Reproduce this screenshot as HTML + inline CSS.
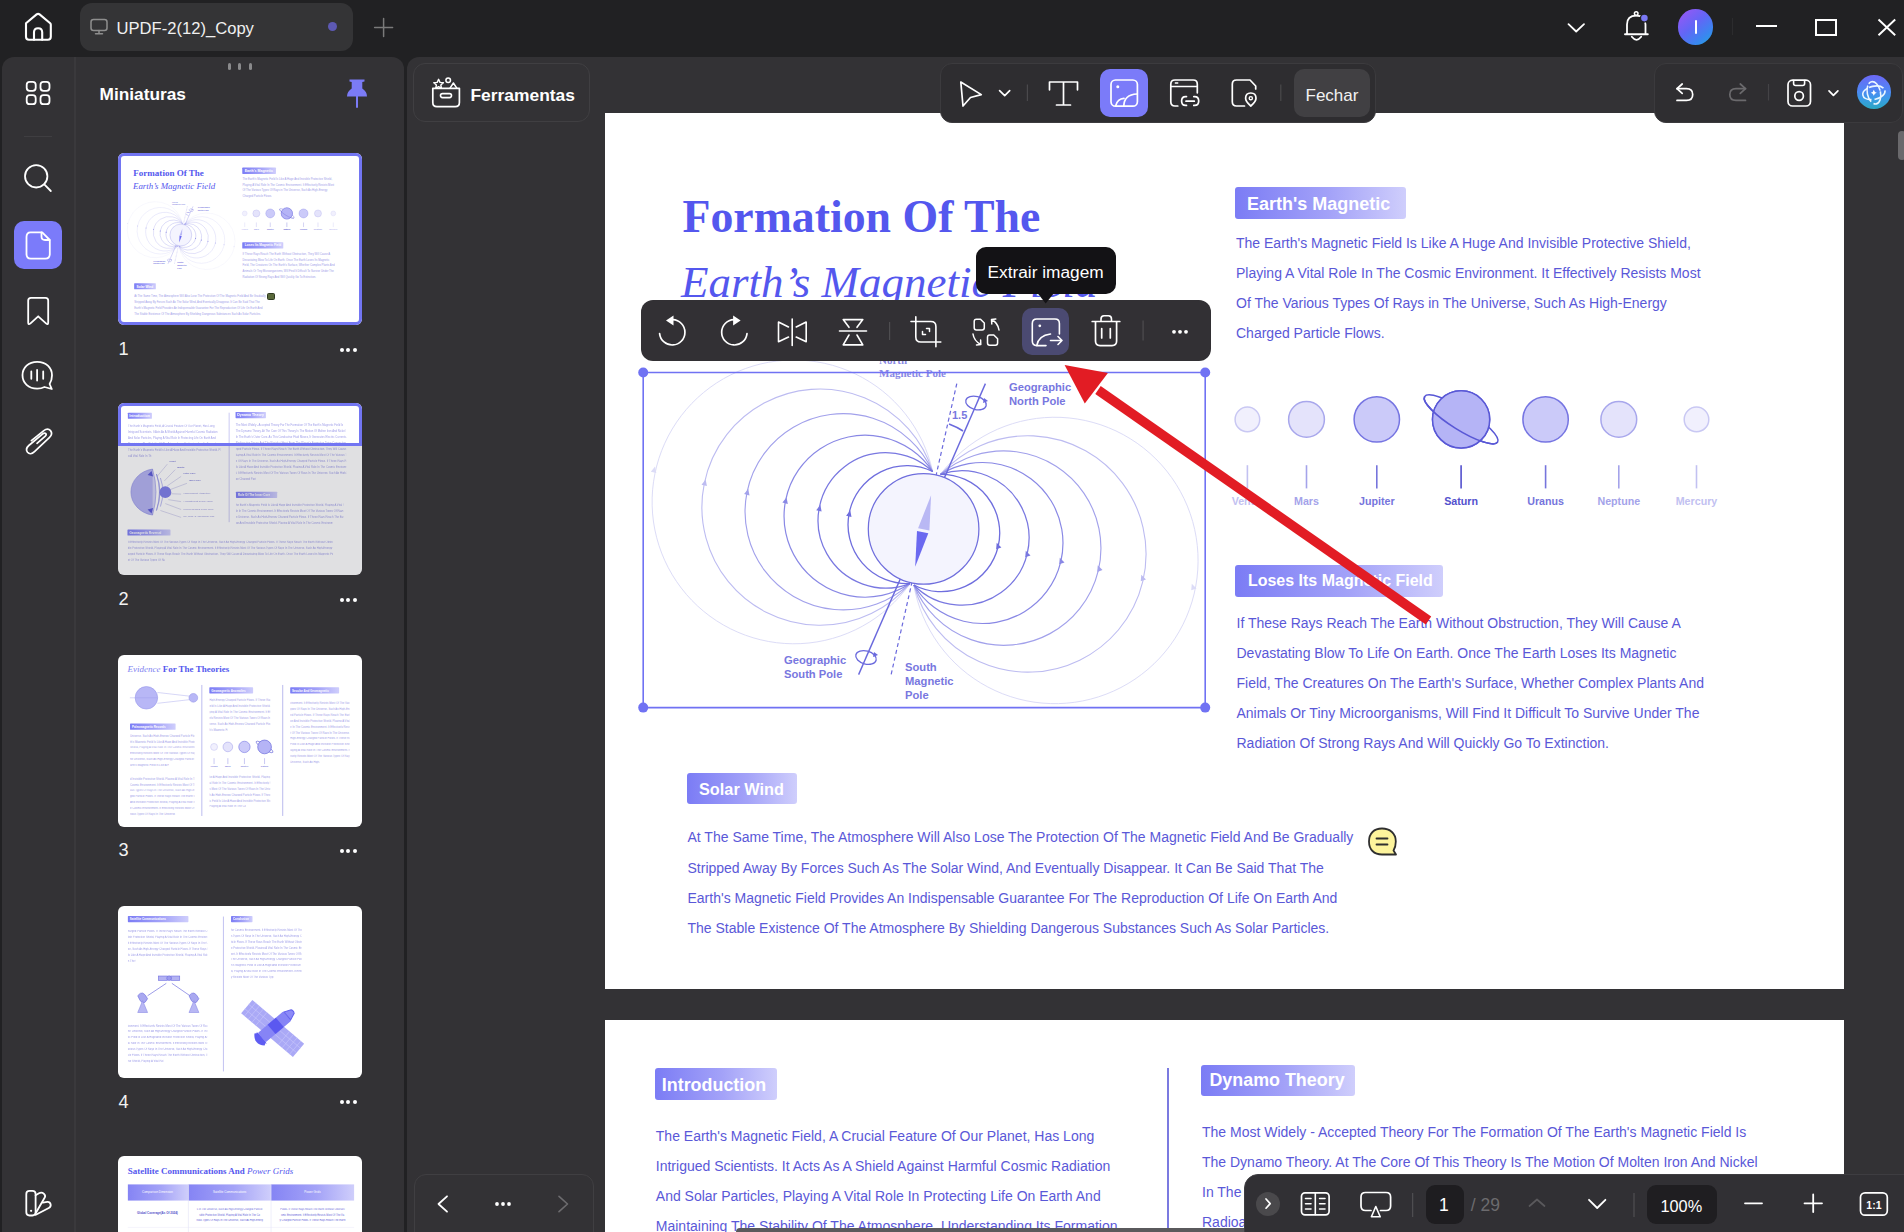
<!DOCTYPE html><html><head><meta charset="utf-8"><style>
*{margin:0;padding:0;box-sizing:border-box}
html,body{width:1904px;height:1232px;overflow:hidden;background:#212123;font-family:"Liberation Sans",sans-serif}
.a{position:absolute}
svg{position:absolute;overflow:visible;left:0;top:0}
.ic{fill:none;stroke:#fff;stroke-width:1.8;stroke-linecap:round;stroke-linejoin:round}
.t{position:absolute;white-space:nowrap;line-height:1}
.pt{position:absolute;white-space:nowrap;color:#5a58d8;font-size:14px;line-height:14px;font-family:"Liberation Sans",sans-serif}
.th div.t[style*="font-size:14px"]{opacity:.6}
.lbl{position:absolute;height:31.5px;border-radius:3px;background:linear-gradient(90deg,#7b7cf5 0%,#a3a2f8 55%,#cfcefc 100%);color:#fff;font-weight:bold;white-space:nowrap;line-height:1}
</style></head><body><div class="a" style="left:0;top:0;width:1904px;height:57px;background:#212123"></div>
<svg width="40" height="40" style="left:18px;top:8px" viewBox="18 8 40 40" ><path class="ic" style="stroke-width:2.1" d="M26 23.2 L36.6 14.4 Q38.1 13.2 39.6 14.4 L50.2 23.2 Q50.8 23.8 50.8 24.8 V36.8 Q50.8 39.8 47.8 39.8 H29 Q26 39.8 26 36.8 V24.8 Q26 23.8 26 23.2 Z"/><path class="ic" style="stroke-width:2.1" d="M34 39.8 V32.3 Q34 28.2 38.1 28.2 Q42.2 28.2 42.2 32.3 V39.8"/></svg>
<div class="a" style="left:80px;top:3px;width:273px;height:48px;background:#343436;border-radius:12px"></div>
<svg width="30" height="30" style="left:85px;top:12px" viewBox="85 12 30 30" ><rect x="91" y="19.5" width="16" height="11" rx="2.5" class="ic" style="stroke:#8e8e8e;stroke-width:1.5"/><path d="M99 30.5 V33.6 M95.5 33.8 H102.5" class="ic" style="stroke:#8e8e8e;stroke-width:1.5"/></svg>
<div class="t" style="left:116.5px;top:21.35px;font-size:16.6px;color:#f0f0f0;font-weight:normal;font-family:'Liberation Sans';font-style:normal;">UPDF-2(12)_Copy</div>
<div class="a" style="left:327.5px;top:22.3px;width:9px;height:9px;border-radius:50%;background:#5d59b3"></div>
<svg width="30" height="30" style="left:368px;top:12px" viewBox="368 12 30 30" ><path d="M383.6 18.5 V36.5 M374.6 27.5 H392.6" class="ic" style="stroke:#7a7a7a;stroke-width:1.5"/></svg>
<svg width="30" height="20" style="left:1560px;top:15px" viewBox="1560 15 30 20" ><path d="M1568.5 24.2 L1576.2 31.5 L1584 24.2" class="ic" style="stroke-width:1.8"/></svg>
<svg width="40" height="40" style="left:1615px;top:5px" viewBox="1615 5 40 40" ><path d="M1627 34 V24.5 Q1627 15.6 1636.2 15.6 Q1645.5 15.6 1645.5 24.5 V34" class="ic" style="stroke-width:1.8"/><path d="M1625 34.2 H1647.8" class="ic" style="stroke-width:1.9"/><path d="M1631.8 36.8 Q1636.5 42.8 1641.2 36.8" class="ic" style="stroke-width:1.8"/><circle cx="1636.2" cy="13.6" r="1.8" class="ic" style="stroke-width:1.5"/><circle cx="1644.4" cy="18.1" r="4.6" fill="#212123"/><circle cx="1644.4" cy="18.1" r="3.3" fill="#7a78f5"/></svg>
<div class="a" style="left:1677.6px;top:9px;width:35.6px;height:35.6px;border-radius:50%;background:linear-gradient(140deg,#a055f5 0%,#6266f6 45%,#3a86f0 75%,#20a8dc 100%)"></div>
<div class="a" style="left:1694.8px;top:20px;width:1.8px;height:14.4px;background:#fff;border-radius:1px"></div>
<div class="a" style="left:1732px;top:18px;width:1px;height:17px;background:#2c2c2e"></div>
<div class="a" style="left:1755.7px;top:25.2px;width:21px;height:2px;background:#fff"></div>
<div class="a" style="left:1815.3px;top:18.5px;width:21.4px;height:17.3px;border:2px solid #fff"></div>
<svg width="30" height="30" style="left:1870px;top:12px" viewBox="1870 12 30 30" ><path d="M1878.5 19.5 L1895.2 35.3 M1895.2 19.5 L1878.5 35.3" class="ic" style="stroke-width:1.9;stroke-linecap:butt"/></svg>
<div class="a" style="left:2px;top:57px;width:402px;height:1175px;background:#333235;border-radius:12px 12px 0 0"></div>
<div class="a" style="left:74px;top:57px;width:1.5px;height:1175px;background:#3a393c"></div>
<svg width="40" height="40" style="left:20px;top:75px" viewBox="20 75 40 40" ><rect x="26.7" y="81.8" width="9" height="9" rx="3" class="ic"/><rect x="40.5" y="81.8" width="9" height="9" rx="3" class="ic"/><rect x="26.7" y="95.2" width="9" height="9" rx="3" class="ic"/><rect x="40.5" y="95.2" width="9" height="9" rx="3" class="ic"/></svg>
<div class="a" style="left:24px;top:135.5px;width:28px;height:1.5px;background:#3f3e41"></div>
<svg width="40" height="40" style="left:18px;top:158px" viewBox="18 158 40 40" ><circle cx="36.2" cy="176.3" r="11.2" class="ic"/><path d="M44.3 184.4 L50.8 191" class="ic"/></svg>
<div class="a" style="left:14px;top:221px;width:48px;height:47.5px;border-radius:10px;background:#7b7bfa"></div>
<svg width="40" height="40" style="left:18px;top:225px" viewBox="18 225 40 40" ><path d="M30.5 232.3 H42.2 L49.8 240 V254 Q49.8 258.7 45.3 258.7 H30.8 Q26.5 258.7 26.5 254 V237 Q26.5 232.3 30.5 232.3 Z" class="ic"/><path d="M41.5 232.5 V236.5 Q41.5 240 45 240 H49.5" class="ic"/></svg>
<svg width="40" height="40" style="left:18px;top:290px" viewBox="18 290 40 40" ><path d="M31 297.8 H45.5 Q48.2 297.8 48.2 300.5 V322.5 Q48.2 325.3 46 323.3 L38.2 316.3 L30.5 323.3 Q28.2 325.3 28.2 322.5 V300.5 Q28.2 297.8 31 297.8 Z" class="ic"/></svg>
<svg width="40" height="40" style="left:18px;top:355px" viewBox="18 355 40 40" ><path d="M37.2 361.8 C28.5 361.8 22.5 367.5 22.5 375.3 C22.5 383 28.5 388.6 37.2 388.6 C40 388.6 42.5 388 44.5 387 L51.8 389 L49.6 384 C51.2 381.5 52 378.5 52 375.3 C52 367.5 46 361.8 37.2 361.8 Z" class="ic"/><path d="M31.3 371.5 V378.8 M37.1 370 V380.5 M43.2 371.5 V378.8" class="ic"/></svg>
<svg width="40" height="40" style="left:18px;top:422px" viewBox="18 422 40 40" ><path d="M31.4 440.7 L43.5 430.8 Q47.8 427.5 50.5 430.6 Q53.2 434 49.3 437.6 L34.5 451.6 Q30.2 455.5 27.5 452.3 Q25 449 28.8 445.5 L42.8 433.8 Q44.8 432.5 45.8 433.6 Q46.8 434.8 45 436.4 L37 443.3" class="ic" style="stroke-width:1.7"/></svg>
<svg width="40" height="40" style="left:18px;top:1183px" viewBox="18 1183 40 40" ><path d="M29.5 1190.8 H32.4 Q35.6 1190.8 35.6 1194 V1212.3 Q35.6 1215.5 32.4 1215.5 H29.5 Q26.3 1215.5 26.3 1212.3 V1194 Q26.3 1190.8 29.5 1190.8 Z" class="ic"/><path d="M35.6 1195.2 L39 1193.2 Q41.8 1191.8 44 1193.8 Q46 1195.8 44.6 1197.8 L35.8 1213" class="ic"/><path d="M42.8 1202.6 L47.3 1201.9 Q50 1201.7 50.6 1204.3 Q51.2 1206.9 48.8 1208 L35.8 1214.8" class="ic"/><circle cx="31.1" cy="1210.8" r="1.1" fill="#fff"/></svg>
<div class="a" style="left:227.5px;top:63px;width:3px;height:6.5px;border-radius:1.5px;background:#8a8a8c"></div>
<div class="a" style="left:238px;top:63px;width:3px;height:6.5px;border-radius:1.5px;background:#8a8a8c"></div>
<div class="a" style="left:248.7px;top:63px;width:3px;height:6.5px;border-radius:1.5px;background:#8a8a8c"></div>
<div class="t" style="left:99.5px;top:86.36px;font-size:17.3px;color:#fff;font-weight:bold;font-family:'Liberation Sans';font-style:normal;">Miniaturas</div>
<svg width="30" height="40" style="left:342px;top:75px" viewBox="342 75 30 40" ><path d="M349.5 79.5 H364.5 V81.5 L362.3 82 V88.5 Q367 91.5 367 96.5 H347 Q347 91.5 351.7 88.5 V82 L349.5 81.5 Z" fill="#7b7bf6"/><path d="M357 96 V107.8" stroke="#7b7bf6" stroke-width="2"/></svg>
<div class="t" style="left:118.5px;top:340.09px;font-size:18.2px;color:#f2f2f2;font-weight:normal;font-family:'Liberation Sans';font-style:normal;">1</div>
<div class="a" style="left:339.5px;top:347.5px;width:4px;height:4px;border-radius:50%;background:#fff"></div>
<div class="a" style="left:346.2px;top:347.5px;width:4px;height:4px;border-radius:50%;background:#fff"></div>
<div class="a" style="left:352.9px;top:347.5px;width:4px;height:4px;border-radius:50%;background:#fff"></div>
<div class="t" style="left:118.5px;top:590.39px;font-size:18.2px;color:#f2f2f2;font-weight:normal;font-family:'Liberation Sans';font-style:normal;">2</div>
<div class="a" style="left:339.5px;top:597.8px;width:4px;height:4px;border-radius:50%;background:#fff"></div>
<div class="a" style="left:346.2px;top:597.8px;width:4px;height:4px;border-radius:50%;background:#fff"></div>
<div class="a" style="left:352.9px;top:597.8px;width:4px;height:4px;border-radius:50%;background:#fff"></div>
<div class="t" style="left:118.5px;top:841.39px;font-size:18.2px;color:#f2f2f2;font-weight:normal;font-family:'Liberation Sans';font-style:normal;">3</div>
<div class="a" style="left:339.5px;top:848.8px;width:4px;height:4px;border-radius:50%;background:#fff"></div>
<div class="a" style="left:346.2px;top:848.8px;width:4px;height:4px;border-radius:50%;background:#fff"></div>
<div class="a" style="left:352.9px;top:848.8px;width:4px;height:4px;border-radius:50%;background:#fff"></div>
<div class="t" style="left:118.5px;top:1092.89px;font-size:18.2px;color:#f2f2f2;font-weight:normal;font-family:'Liberation Sans';font-style:normal;">4</div>
<div class="a" style="left:339.5px;top:1100.3px;width:4px;height:4px;border-radius:50%;background:#fff"></div>
<div class="a" style="left:346.2px;top:1100.3px;width:4px;height:4px;border-radius:50%;background:#fff"></div>
<div class="a" style="left:352.9px;top:1100.3px;width:4px;height:4px;border-radius:50%;background:#fff"></div>
<div class="a" style="left:407px;top:57px;width:1497px;height:1175px;background:#333235;border-radius:12px 0 0 0"></div>
<div class="a" style="left:605px;top:113px;width:1239px;height:875.5px;background:#fff"></div>
<div class="a" style="left:605px;top:1019.5px;width:1239px;height:213px;background:#fff"></div>
<div class="a" style="left:1897.5px;top:131px;width:8px;height:29px;border-radius:4px;background:#6a696c"></div>
<div class="a" style="left:117.7px;top:153.2px;width:244.4px;height:172.1px;border-radius:6px;overflow:hidden;background:#fff"><div class="a th" style="left:0;top:0;width:1239px;height:876px;transform:scale(0.19725);transform-origin:0 0"><div class="t" style="left:77.5px;top:80.94px;font-size:45.8px;color:#5457ee;font-weight:bold;font-family:'Liberation Serif';font-style:normal;">Formation Of The</div><div class="t" style="left:76px;top:147.11px;font-size:45px;color:#5457ee;font-weight:normal;font-family:'Liberation Serif';font-style:italic;">Earth’s Magnetic Field</div><div class="lbl" style="left:630.2px;top:74.1px;width:171.3px"></div><div class="t" style="left:642px;top:81.66px;font-size:18px;color:#fff;font-weight:bold;font-family:'Liberation Sans';font-style:normal;">Earth's Magnetic</div><div class="t" style="left:631px;top:122.55px;font-size:14px;color:#5a58d8;font-weight:normal;font-family:'Liberation Sans';font-style:normal;">The Earth's Magnetic Field Is Like A Huge And Invisible Protective Shield,</div><div class="t" style="left:631px;top:152.62px;font-size:14px;color:#5a58d8;font-weight:normal;font-family:'Liberation Sans';font-style:normal;">Playing A Vital Role In The Cosmic Environment. It Effectively Resists Most</div><div class="t" style="left:631px;top:182.69px;font-size:14px;color:#5a58d8;font-weight:normal;font-family:'Liberation Sans';font-style:normal;">Of The Various Types Of Rays in The Universe, Such As High-Energy</div><div class="t" style="left:631px;top:212.76px;font-size:14px;color:#5a58d8;font-weight:normal;font-family:'Liberation Sans';font-style:normal;">Charged Particle Flows.</div><svg width="1239" height="877" style="left:0;top:0" viewBox="0 0 1239 877"><path d="M327.6 358.5 A141.9 141.9 0 1 0 305.0 470.6" fill="none" stroke="#dcdcf7" stroke-width="1.0"/><path d="M335.5 361.3 A143.2 143.2 0 1 1 308.8 472.0" fill="none" stroke="#dcdcf7" stroke-width="1.0"/><path d="M327.6 358.5 A118.1 118.1 0 1 0 305.0 470.6" fill="none" stroke="#bdbcf1" stroke-width="1.1"/><path d="M335.5 361.3 A118.2 118.2 0 1 1 308.8 472.0" fill="none" stroke="#bdbcf1" stroke-width="1.1"/><path d="M327.6 358.5 A98.1 98.1 0 1 0 305.0 470.6" fill="none" stroke="#a2a1eb" stroke-width="1.15"/><path d="M335.5 361.3 A97.2 97.2 0 1 1 308.8 472.0" fill="none" stroke="#a2a1eb" stroke-width="1.15"/><path d="M327.6 358.5 A81.0 81.0 0 1 0 305.0 470.6" fill="none" stroke="#8988e5" stroke-width="1.2"/><path d="M335.5 361.3 A80.5 80.5 0 1 1 308.8 472.0" fill="none" stroke="#8988e5" stroke-width="1.2"/><path d="M327.6 358.5 A67.7 67.7 0 1 0 305.0 470.6" fill="none" stroke="#7978e1" stroke-width="1.25"/><path d="M335.5 361.3 A67.2 67.2 0 1 1 308.8 472.0" fill="none" stroke="#7978e1" stroke-width="1.25"/><path d="M327.6 358.5 A59.0 59.0 0 1 0 305.0 470.6" fill="none" stroke="#6f6ede" stroke-width="1.3"/><path d="M335.5 361.3 A58.7 58.7 0 1 1 308.8 472.0" fill="none" stroke="#6f6ede" stroke-width="1.3"/><path d="M49.2 353.5 L52.0 359.5 L46.4 359.5 Z" fill="#dcdcf7" transform="rotate(14 49.2 357.0)"/><path d="M588.0 470.5 L590.8 476.5 L585.2 476.5 Z" fill="#dcdcf7" transform="rotate(-20 588.0 474.0)"/><path d="M99.8 366.4 L102.6 372.4 L97.0 372.4 Z" fill="#bdbcf1" transform="rotate(14 99.8 369.9)"/><path d="M537.5 461.5 L540.3 467.5 L534.7 467.5 Z" fill="#bdbcf1" transform="rotate(-20 537.5 465.0)"/><path d="M142.4 375.8 L145.2 381.8 L139.6 381.8 Z" fill="#a2a1eb" transform="rotate(14 142.4 379.3)"/><path d="M494.0 452.1 L496.8 458.1 L491.2 458.1 Z" fill="#a2a1eb" transform="rotate(-20 494.0 455.6)"/><path d="M180.7 384.3 L183.5 390.3 L177.9 390.3 Z" fill="#8988e5" transform="rotate(14 180.7 387.8)"/><path d="M456.0 444.5 L458.8 450.5 L453.2 450.5 Z" fill="#8988e5" transform="rotate(-20 456.0 448.0)"/><path d="M214.5 392.0 L217.3 398.0 L211.7 398.0 Z" fill="#7978e1" transform="rotate(14 214.5 395.5)"/><path d="M422.0 437.5 L424.8 443.5 L419.2 443.5 Z" fill="#7978e1" transform="rotate(-20 422.0 441.0)"/><path d="M244.4 397.5 L247.2 403.5 L241.6 403.5 Z" fill="#6f6ede" transform="rotate(14 244.4 401.0)"/><path d="M392.9 429.5 L395.7 435.5 L390.1 435.5 Z" fill="#6f6ede" transform="rotate(-20 392.9 433.0)"/><path d="M380.4 270.6 L253.60000000000002 561.6" stroke="#6a69dd" stroke-width="1.4"/><path d="M351.79999999999995 270.6 L285.70000000000005 563.4" stroke="#6a69dd" stroke-width="1.2" stroke-dasharray="4 3"/><circle cx="318.6" cy="415.9" r="55.3" fill="#f4f4fe" stroke="#6f6edd" stroke-width="1.25"/><path d="M326.1 382.2 L324.4 417.5 L313.1 415.20000000000005 Z" fill="#b9b8f4"/><path d="M312 418 L323.29999999999995 420.29999999999995 L310.20000000000005 453.79999999999995 Z" fill="#6b69f0"/><path d="M344 311 Q352 314 358 318" fill="none" stroke="#6a69dd" stroke-width="1.6"/><ellipse cx="371" cy="290" rx="10.5" ry="6.5" transform="rotate(15 371 290)" fill="none" stroke="#6a69dd" stroke-width="1.3"/><path d="M379 285 l4 3 l-5 2 z" fill="#6a69dd"/><ellipse cx="261" cy="544.5" rx="10.5" ry="6.5" transform="rotate(15 261 544.5)" fill="none" stroke="#6a69dd" stroke-width="1.3"/><path d="M269 539 l4 3 l-5 2 z" fill="#6a69dd"/></svg><svg width="1239" height="877" style="left:0;top:0" viewBox="0 0 1239 877"><circle cx="642.4" cy="306.4" r="12.3" fill="#f1f0fd" stroke="#c9c8f3" stroke-width="1.5"/><path d="M642.4 352.2 V375.4" stroke="#c2c1f1" stroke-width="1.6"/><circle cx="701.5" cy="306.4" r="17.9" fill="#e4e3fb" stroke="#a8a7ec" stroke-width="1.5"/><path d="M701.5 352.2 V375.4" stroke="#a4a3ea" stroke-width="1.6"/><circle cx="771.8" cy="306.4" r="22.7" fill="#cbcaf9" stroke="#7675e2" stroke-width="1.5"/><path d="M771.8 352.2 V375.4" stroke="#7675dc" stroke-width="1.6"/><circle cx="856.1" cy="306.4" r="28.6" fill="#b5b4f6" stroke="#5958d6" stroke-width="1.5"/><path d="M856.1 352.2 V375.4" stroke="#5351cd" stroke-width="1.6"/><circle cx="940.6" cy="306.4" r="22.7" fill="#cbcaf9" stroke="#7675e2" stroke-width="1.5"/><path d="M940.6 352.2 V375.4" stroke="#7675dc" stroke-width="1.6"/><circle cx="1013.8" cy="306.4" r="17.9" fill="#e4e3fb" stroke="#a8a7ec" stroke-width="1.5"/><path d="M1013.8 352.2 V375.4" stroke="#a4a3ea" stroke-width="1.6"/><circle cx="1091.5" cy="306.4" r="12.3" fill="#f1f0fd" stroke="#c9c8f3" stroke-width="1.5"/><path d="M1091.5 352.2 V375.4" stroke="#c2c1f1" stroke-width="1.6"/><ellipse cx="856.1" cy="306.4" rx="43" ry="10.5" transform="rotate(32 856.1 306.4)" fill="none" stroke="#5958d6" stroke-width="1.6"/><circle cx="856.1" cy="306.4" r="28.6" fill="#b5b4f6" stroke="#5958d6" stroke-width="1.5"/><path d="M819.6 283.6 A43 10.5 32 0 0 892.6 329.2" fill="none" stroke="#5958d6" stroke-width="1.6"/></svg><div class="t" style="left:602.4px;width:80px;text-align:center;top:383.3px;font-size:10.7px;font-weight:bold;color:#c2c1f1">Venus</div><div class="t" style="left:661.5px;width:80px;text-align:center;top:383.3px;font-size:10.7px;font-weight:bold;color:#a4a3ea">Mars</div><div class="t" style="left:731.8px;width:80px;text-align:center;top:383.3px;font-size:10.7px;font-weight:bold;color:#7675dc">Jupiter</div><div class="t" style="left:816.1px;width:80px;text-align:center;top:383.3px;font-size:10.7px;font-weight:bold;color:#5351cd">Saturn</div><div class="t" style="left:900.6px;width:80px;text-align:center;top:383.3px;font-size:10.7px;font-weight:bold;color:#7675dc">Uranus</div><div class="t" style="left:973.8px;width:80px;text-align:center;top:383.3px;font-size:10.7px;font-weight:bold;color:#a4a3ea">Neptune</div><div class="t" style="left:1051.5px;width:80px;text-align:center;top:383.3px;font-size:10.7px;font-weight:bold;color:#c2c1f1">Mercury</div><div class="lbl" style="left:630.2px;top:452.2px;width:207.7px"></div><div class="t" style="left:642.9px;top:460.26px;font-size:16px;color:#fff;font-weight:bold;font-family:'Liberation Sans';font-style:normal;">Loses Its Magnetic Field</div><div class="t" style="left:631.5px;top:502.75px;font-size:14px;color:#5a58d8;font-weight:normal;font-family:'Liberation Sans';font-style:normal;">If These Rays Reach The Earth Without Obstruction, They Will Cause A</div><div class="t" style="left:631.5px;top:532.85px;font-size:14px;color:#5a58d8;font-weight:normal;font-family:'Liberation Sans';font-style:normal;">Devastating Blow To Life On Earth. Once The Earth Loses Its Magnetic</div><div class="t" style="left:631.5px;top:562.95px;font-size:14px;color:#5a58d8;font-weight:normal;font-family:'Liberation Sans';font-style:normal;">Field, The Creatures On The Earth's Surface, Whether Complex Plants And</div><div class="t" style="left:631.5px;top:593.05px;font-size:14px;color:#5a58d8;font-weight:normal;font-family:'Liberation Sans';font-style:normal;">Animals Or Tiny Microorganisms, Will Find It Difficult To Survive Under The</div><div class="t" style="left:631.5px;top:623.15px;font-size:14px;color:#5a58d8;font-weight:normal;font-family:'Liberation Sans';font-style:normal;">Radiation Of Strong Rays And Will Quickly Go To Extinction.</div><div class="lbl" style="left:82.0px;top:659.8px;width:110.2px"></div><div class="t" style="left:94px;top:667.70px;font-size:16.3px;color:#fff;font-weight:bold;font-family:'Liberation Sans';font-style:normal;">Solar Wind</div><div class="t" style="left:82.5px;top:717.45px;font-size:14px;color:#5a58d8;font-weight:normal;font-family:'Liberation Sans';font-style:normal;">At The Same Time, The Atmosphere Will Also Lose The Protection Of The Magnetic Field And Be Gradually</div><div class="t" style="left:82.5px;top:747.50px;font-size:14px;color:#5a58d8;font-weight:normal;font-family:'Liberation Sans';font-style:normal;">Stripped Away By Forces Such As The Solar Wind, And Eventually Disappear. It Can Be Said That The</div><div class="t" style="left:82.5px;top:777.55px;font-size:14px;color:#5a58d8;font-weight:normal;font-family:'Liberation Sans';font-style:normal;">Earth's Magnetic Field Provides An Indispensable Guarantee For The Reproduction Of Life On Earth And</div><div class="t" style="left:82.5px;top:807.60px;font-size:14px;color:#5a58d8;font-weight:normal;font-family:'Liberation Sans';font-style:normal;">The Stable Existence Of The Atmosphere By Shielding Dangerous Substances Such As Solar Particles.</div><div class="t" style="left:404px;top:268.92px;font-size:11.2px;color:#7877e0;font-weight:bold;font-family:'Liberation Sans';font-style:normal;">Geographic</div><div class="t" style="left:404px;top:282.82px;font-size:11.2px;color:#7877e0;font-weight:bold;font-family:'Liberation Sans';font-style:normal;">North Pole</div><div class="t" style="left:179px;top:541.52px;font-size:11.2px;color:#7877e0;font-weight:bold;font-family:'Liberation Sans';font-style:normal;">Geographic</div><div class="t" style="left:179px;top:555.52px;font-size:11.2px;color:#7877e0;font-weight:bold;font-family:'Liberation Sans';font-style:normal;">South Pole</div><div class="t" style="left:300px;top:549.32px;font-size:11.2px;color:#7877e0;font-weight:bold;font-family:'Liberation Sans';font-style:normal;">South</div><div class="t" style="left:300px;top:563.32px;font-size:11.2px;color:#7877e0;font-weight:bold;font-family:'Liberation Sans';font-style:normal;">Magnetic</div><div class="t" style="left:300px;top:577.32px;font-size:11.2px;color:#7877e0;font-weight:bold;font-family:'Liberation Sans';font-style:normal;">Pole</div><div class="t" style="left:347px;top:296.69px;font-size:11px;color:#7877e0;font-weight:bold;font-family:'Liberation Sans';font-style:normal;">1.5</div><div class="t" style="left:274px;top:255.29px;font-size:11px;color:#8a89e4;font-weight:bold;font-family:'Liberation Serif';font-style:normal;">Magnetic Pole</div><div class="t" style="left:274px;top:241.79px;font-size:11px;color:#8a89e4;font-weight:bold;font-family:'Liberation Serif';font-style:normal;">North</div></div></div>
<div class="a" style="left:117.7px;top:403.2px;width:244.4px;height:172.1px;border-radius:6px;overflow:hidden;background:#fff"><div class="a th" style="left:0;top:0;width:1239px;height:876px;transform:scale(0.19725);transform-origin:0 0"><div class="lbl" style="left:50px;top:48.7px;width:121.9px"></div><div class="t" style="left:56.8px;top:57.4px;font-size:17.9px;color:#fff;font-weight:bold;font-family:'Liberation Sans';font-style:normal">Introduction</div><div class="t" style="left:50.8px;top:109.9px;font-size:14px;color:#5a58d8;font-weight:normal;font-family:'Liberation Sans';font-style:normal">The Earth's Magnetic Field, A Crucial Feature Of Our Planet, Has Long</div><div class="t" style="left:50.8px;top:139.9px;font-size:14px;color:#5a58d8;font-weight:normal;font-family:'Liberation Sans';font-style:normal">Intrigued Scientists. It Acts As A Shield Against Harmful Cosmic Radiation</div><div class="t" style="left:50.8px;top:169.9px;font-size:14px;color:#5a58d8;font-weight:normal;font-family:'Liberation Sans';font-style:normal">And Solar Particles, Playing A Vital Role In Protecting Life On Earth And</div><div class="t" style="left:50.8px;top:199.9px;font-size:14px;color:#5a58d8;font-weight:normal;font-family:'Liberation Sans';font-style:normal">Maintaining The Stability Of The Atmosphere. Understanding Its Formation</div><div class="t" style="left:50.8px;top:230.0px;font-size:14px;color:#5a58d8;width:470px;overflow:hidden">The Earth's Magnetic Field Is Like A Huge And Invisible Protective Shield, Playin</div><div class="t" style="left:50.8px;top:259.9px;font-size:14px;color:#5a58d8;width:118px;overflow:hidden">g A Vital Role In The Cosmi</div><svg width="1239" height="876" viewBox="0 0 1239 876" style="left:0;top:0"><path d="M175 335 A 130 118 0 0 0 175 568 Z" fill="#b3b2f2" stroke="#8a89e6" stroke-width="3"/><path d="M175 335 Q 210 450 175 568" fill="#d5d4f8" stroke="#8a89e6" stroke-width="3"/><path d="M195 360 Q 225 450 195 545 Q 230 450 195 360" fill="#c4c3f5" stroke="#8a89e6" stroke-width="3"/><path d="M215 380 Q 240 450 215 525" fill="none" stroke="#8a89e6" stroke-width="3"/><circle cx="240" cy="452" r="30" fill="#7d7cea"/><path d="M150 365 l20 -20 l8 28 z M150 540 l20 20 l8 -28 z" fill="#5a58d8"/><path d="M200 370 L250 310 M235 395 L290 338 M250 420 L320 372 M262 440 L350 407 M270 460 L320 462 M255 490 L320 500 M240 510 L320 540 M215 545 L320 580" stroke="#9c9bd8" stroke-width="2" fill="none"/></svg><div class="t" style="left:260px;top:289.8px;font-size:12px;color:#7776d6;font-weight:bold;font-family:'Liberation Sans';font-style:normal">Crust</div><div class="t" style="left:300px;top:317.8px;font-size:12px;color:#7776d6;font-weight:bold;font-family:'Liberation Sans';font-style:normal">Mantle</div><div class="t" style="left:330px;top:351.8px;font-size:12px;color:#7776d6;font-weight:bold;font-family:'Liberation Sans';font-style:normal">Outer Core</div><div class="t" style="left:360px;top:386.8px;font-size:12px;color:#7776d6;font-weight:bold;font-family:'Liberation Sans';font-style:normal">Inner Core</div><div class="t" style="left:332px;top:452.3px;font-size:11.5px;color:#8a89d8;font-weight:normal;font-family:'Liberation Sans';font-style:normal">c Environment. It Effectivel</div><div class="t" style="left:332px;top:491.3px;font-size:11.5px;color:#8a89d8;font-weight:normal;font-family:'Liberation Sans';font-style:normal">y Resists Most Of The Variou</div><div class="t" style="left:332px;top:531.3px;font-size:11.5px;color:#8a89d8;font-weight:normal;font-family:'Liberation Sans';font-style:normal">s Types Of Rays In The Unive</div><div class="t" style="left:332px;top:570.3px;font-size:11.5px;color:#8a89d8;font-weight:normal;font-family:'Liberation Sans';font-style:normal">rse, Such As High-Energy Cha</div><div class="a" style="left:562.2px;top:48.5px;width:1.6px;height:555px;background:#7b7ae0"></div><div class="lbl" style="left:596px;top:45.1px;width:153.8px"></div><div class="t" style="left:604.4px;top:52.8px;font-size:17.9px;color:#fff;font-weight:bold;font-family:'Liberation Sans';font-style:normal">Dynamo Theory</div><div class="t" style="left:597px;top:105.6px;font-size:14px;color:#5a58d8;font-weight:normal;font-family:'Liberation Sans';font-style:normal">The Most Widely - Accepted Theory For The Formation Of The Earth's Magnetic Field Is</div><div class="t" style="left:597px;top:135.6px;font-size:14px;color:#5a58d8;font-weight:normal;font-family:'Liberation Sans';font-style:normal">The Dynamo Theory. At The Core Of This Theory Is The Motion Of Molten Iron And Nickel</div><div class="t" style="left:597px;top:165.6px;font-size:14px;color:#5a58d8;font-weight:normal;font-family:'Liberation Sans';font-style:normal">In The Earth's Outer Core. As This Conductive Fluid Moves, It Generates Electric Currents.</div><div class="t" style="left:597px;top:195.6px;font-size:14px;color:#5a58d8;font-weight:normal;font-family:'Liberation Sans';font-style:normal">Radioactive Decay And The Residual Heat From The Planet's Formation Drive Convection</div><div class="t" style="left:597px;top:225.7px;font-size:14px;color:#5a58d8;width:560px;overflow:hidden">rged Particle Flows. If These Rays Reach The Earth Without Obstruction, They Will Cause A Deva</div><div class="t" style="left:597px;top:255.7px;font-size:14px;color:#5a58d8;width:560px;overflow:hidden">laying A Vital Role In The Cosmic Environment. It Effectively Resists Most Of The Various Type</div><div class="t" style="left:597px;top:285.6px;font-size:14px;color:#5a58d8;width:560px;overflow:hidden">s Of Rays In The Universe, Such As High-Energy Charged Particle Flows. If These Rays Reach The</div><div class="t" style="left:597px;top:315.6px;font-size:14px;color:#5a58d8;width:560px;overflow:hidden"> Is Like A Huge And Invisible Protective Shield, Playing A Vital Role In The Cosmic Environmen</div><div class="t" style="left:597px;top:345.6px;font-size:14px;color:#5a58d8;width:560px;overflow:hidden">t. It Effectively Resists Most Of The Various Types Of Rays In The Universe, Such As High-Ener</div><div class="t" style="left:597px;top:375.6px;font-size:14px;color:#5a58d8;width:101px;overflow:hidden">gy Charged Particle Flows</div><div class="lbl" style="left:597.8px;top:449.5px;width:209px"></div><div class="t" style="left:607.8px;top:458.8px;font-size:15px;color:#fff;font-weight:bold;font-family:'Liberation Sans';font-style:normal">Role Of The Inner Core</div><div class="t" style="left:597.8px;top:509.1px;font-size:14px;color:#5a58d8;width:545px;overflow:hidden">he Earth's Magnetic Field Is Like A Huge And Invisible Protective Shield, Playing A Vital Ro</div><div class="t" style="left:597.8px;top:539.1px;font-size:14px;color:#5a58d8;width:545px;overflow:hidden">le In The Cosmic Environment. It Effectively Resists Most Of The Various Types Of Rays In Th</div><div class="t" style="left:597.8px;top:569.1px;font-size:14px;color:#5a58d8;width:545px;overflow:hidden">e Universe, Such As High-Energy Charged Particle Flows. If These Rays Reach The Earth Withou</div><div class="t" style="left:597.8px;top:599.1px;font-size:14px;color:#5a58d8;width:490px;overflow:hidden">ge And Invisible Protective Shield, Playing A Vital Role In The Cosmic Environment. </div><div class="lbl" style="left:48.2px;top:640.9px;width:218px"></div><div class="t" style="left:58.2px;top:650.2px;font-size:15px;color:#fff;font-weight:bold;font-family:'Liberation Sans';font-style:normal">Geomagnetic Reversal</div><div class="t" style="left:50px;top:698.1px;font-size:14px;color:#5a58d8;width:1040px;overflow:hidden">It Effectively Resists Most Of The Various Types Of Rays In The Universe, Such As High-Energy Charged Particle Flows. If These Rays Reach The Earth Without Obstruction</div><div class="t" style="left:50px;top:728.1px;font-size:14px;color:#5a58d8;width:1040px;overflow:hidden">ble Protective Shield, Playing A Vital Role In The Cosmic Environment. It Effectively Resists Most Of The Various Types Of Rays In The Universe, Such As High-Energy Ch</div><div class="t" style="left:50px;top:758.1px;font-size:14px;color:#5a58d8;width:1040px;overflow:hidden">arged Particle Flows. If These Rays Reach The Earth Without Obstruction, They Will Cause A Devastating Blow To Life On Earth. Once The Earth Loses Its Magnetic Field, </div><div class="t" style="left:50px;top:788.1px;font-size:14px;color:#5a58d8;width:187px;overflow:hidden">st Of The Various Types Of Rays In The</div></div><div class="a" style="left:0;top:43px;width:244.4px;height:130px;background:rgba(60,60,75,.16)"></div></div>
<div class="a" style="left:117.7px;top:655.2px;width:244.4px;height:172.1px;border-radius:6px;overflow:hidden;background:#fff"><div class="a th" style="left:0;top:0;width:1239px;height:876px;transform:scale(0.19725);transform-origin:0 0"><div class="t" style="left:48.2px;top:48.8px;font-size:45.6px;color:#5457ee;font-weight:bold;font-family:'Liberation Serif';font-style:normal"><i style="font-weight:normal;opacity:.75">Evidence </i>For The Theories</div><svg width="1239" height="876" viewBox="0 0 1239 876" style="left:0;top:0"><circle cx="144" cy="217" r="57" fill="#b8b7f6" stroke="#9897ea" stroke-width="3"/><path d="M200 190 L375 210 M200 245 L375 225 M60 217 L200 217" stroke="#9897ea" stroke-width="2"/><circle cx="382" cy="217" r="22" fill="#b8b7f6" stroke="#9897ea" stroke-width="3"/><path d="M425 152 V816 M835 152 V816" stroke="#8c8be2" stroke-width="3"/><circle cx="487" cy="466" r="17.5" fill="#f1f0fd" stroke="#c9c8f3" stroke-width="3"/><circle cx="557" cy="466" r="24.4" fill="#e4e3fb" stroke="#a8a7ec" stroke-width="3"/><circle cx="641" cy="466" r="28.8" fill="#cbcaf9" stroke="#7675e2" stroke-width="3"/><ellipse cx="743" cy="466" rx="50" ry="12" transform="rotate(33 743 466)" fill="none" stroke="#5958d6" stroke-width="3"/><circle cx="743" cy="466" r="34.9" fill="#b5b4f6" stroke="#5958d6" stroke-width="3"/><path d="M487 523 V553 M557 523 V553 M641 523 V553 M743 523 V553" stroke="#a3a2ea" stroke-width="3"/></svg><div class="lbl" style="left:61px;top:347px;width:231px"></div><div class="t" style="left:71px;top:356.3px;font-size:15px;color:#fff;font-weight:bold;font-family:'Liberation Sans';font-style:normal">Paleomagnetic Records</div><div class="t" style="left:61px;top:402.1px;font-size:14px;color:#5a58d8;width:327px;overflow:hidden"> Universe, Such As High-Energy Charged Particle Flows. If T</div><div class="t" style="left:61px;top:432.1px;font-size:14px;color:#5a58d8;width:327px;overflow:hidden">th's Magnetic Field Is Like A Huge And Invisible Protective</div><div class="t" style="left:61px;top:462.1px;font-size:14px;color:#5a58d8;width:327px;overflow:hidden"> Shield, Playing A Vital Role In The Cosmic Environment. It</div><div class="t" style="left:61px;top:492.1px;font-size:14px;color:#5a58d8;width:327px;overflow:hidden"> Effectively Resists Most Of The Various Types Of Rays In T</div><div class="t" style="left:61px;top:522.1px;font-size:14px;color:#5a58d8;width:327px;overflow:hidden">he Universe, Such As High-Energy Charged Particle Flows. If</div><div class="t" style="left:61px;top:552.1px;font-size:14px;color:#5a58d8;width:196px;overflow:hidden">arth's Magnetic Field Is Like A Huge An</div><div class="t" style="left:61px;top:620.1px;font-size:14px;color:#5a58d8;width:327px;overflow:hidden">d Invisible Protective Shield, Playing A Vital Role In The </div><div class="t" style="left:61px;top:650.1px;font-size:14px;color:#5a58d8;width:327px;overflow:hidden">Cosmic Environment. It Effectively Resists Most Of The Vari</div><div class="t" style="left:61px;top:680.1px;font-size:14px;color:#5a58d8;width:327px;overflow:hidden">ous Types Of Rays In The Universe, Such As High-Energy Char</div><div class="t" style="left:61px;top:710.1px;font-size:14px;color:#5a58d8;width:327px;overflow:hidden">ged Particle Flows. If These Rays Reach The Earth Without O</div><div class="t" style="left:61px;top:740.1px;font-size:14px;color:#5a58d8;width:327px;overflow:hidden">And Invisible Protective Shield, Playing A Vital Role In Th</div><div class="t" style="left:61px;top:770.1px;font-size:14px;color:#5a58d8;width:327px;overflow:hidden">e Cosmic Environment. It Effectively Resists Most Of The Va</div><div class="t" style="left:61px;top:800.1px;font-size:14px;color:#5a58d8;width:229px;overflow:hidden">rious Types Of Rays In The Universe, Such As</div><div class="lbl" style="left:462.6px;top:163.8px;width:222px"></div><div class="t" style="left:472.6px;top:173.1px;font-size:15px;color:#fff;font-weight:bold;font-family:'Liberation Sans';font-style:normal">Geomagnetic Anomalies</div><div class="t" style="left:462.6px;top:221.2px;font-size:14px;color:#5a58d8;width:309px;overflow:hidden"> High-Energy Charged Particle Flows. If These Rays Reach</div><div class="t" style="left:462.6px;top:251.2px;font-size:14px;color:#5a58d8;width:309px;overflow:hidden">ield Is Like A Huge And Invisible Protective Shield, Pla</div><div class="t" style="left:462.6px;top:281.1px;font-size:14px;color:#5a58d8;width:309px;overflow:hidden">ying A Vital Role In The Cosmic Environment. It Effectiv</div><div class="t" style="left:462.6px;top:311.1px;font-size:14px;color:#5a58d8;width:309px;overflow:hidden">ely Resists Most Of The Various Types Of Rays In The Uni</div><div class="t" style="left:462.6px;top:341.1px;font-size:14px;color:#5a58d8;width:309px;overflow:hidden">verse, Such As High-Energy Charged Particle Flows. If Th</div><div class="t" style="left:462.6px;top:371.1px;font-size:14px;color:#5a58d8;width:93px;overflow:hidden">h's Magnetic Field Is Li</div><div class="t" style="left:437px;width:100px;text-align:center;top:560px;font-size:12px;font-weight:bold;color:#8382de">Venus</div><div class="t" style="left:507px;width:100px;text-align:center;top:560px;font-size:12px;font-weight:bold;color:#8382de">Mars</div><div class="t" style="left:591px;width:100px;text-align:center;top:560px;font-size:12px;font-weight:bold;color:#8382de">Jupiter</div><div class="t" style="left:693px;width:100px;text-align:center;top:560px;font-size:12px;font-weight:bold;color:#8382de">Saturn</div><div class="t" style="left:462.6px;top:611.1px;font-size:14px;color:#5a58d8;width:309px;overflow:hidden">ke A Huge And Invisible Protective Shield, Playing A Vit</div><div class="t" style="left:462.6px;top:641.1px;font-size:14px;color:#5a58d8;width:309px;overflow:hidden">al Role In The Cosmic Environment. It Effectively Resist</div><div class="t" style="left:462.6px;top:671.1px;font-size:14px;color:#5a58d8;width:309px;overflow:hidden">s Most Of The Various Types Of Rays In The Universe, Suc</div><div class="t" style="left:462.6px;top:701.1px;font-size:14px;color:#5a58d8;width:309px;overflow:hidden">h As High-Energy Charged Particle Flows. If These Rays R</div><div class="t" style="left:462.6px;top:731.1px;font-size:14px;color:#5a58d8;width:309px;overflow:hidden">ic Field Is Like A Huge And Invisible Protective Shield,</div><div class="t" style="left:462.6px;top:761.1px;font-size:14px;color:#5a58d8;width:185px;overflow:hidden"> Playing A Vital Role In The Cosmic En</div><div class="lbl" style="left:872.6px;top:163.8px;width:248px"></div><div class="t" style="left:882.6px;top:173.1px;font-size:15px;color:#fff;font-weight:bold;font-family:'Liberation Sans';font-style:normal">Secular And Geomagnetic</div><div class="t" style="left:872.6px;top:236.2px;font-size:14px;color:#5a58d8;width:301px;overflow:hidden">vironment. It Effectively Resists Most Of The Various T</div><div class="t" style="left:872.6px;top:266.1px;font-size:14px;color:#5a58d8;width:301px;overflow:hidden">ypes Of Rays In The Universe, Such As High-Energy Charg</div><div class="t" style="left:872.6px;top:296.1px;font-size:14px;color:#5a58d8;width:301px;overflow:hidden">ed Particle Flows. If These Rays Reach The Earth Withou</div><div class="t" style="left:872.6px;top:326.1px;font-size:14px;color:#5a58d8;width:301px;overflow:hidden">ge And Invisible Protective Shield, Playing A Vital Rol</div><div class="t" style="left:872.6px;top:356.1px;font-size:14px;color:#5a58d8;width:301px;overflow:hidden">e In The Cosmic Environment. It Effectively Resists Mos</div><div class="t" style="left:872.6px;top:386.1px;font-size:14px;color:#5a58d8;width:301px;overflow:hidden">t Of The Various Types Of Rays In The Universe, Such As</div><div class="t" style="left:872.6px;top:416.1px;font-size:14px;color:#5a58d8;width:301px;overflow:hidden"> High-Energy Charged Particle Flows. If These Rays Reac</div><div class="t" style="left:872.6px;top:446.1px;font-size:14px;color:#5a58d8;width:301px;overflow:hidden">Field Is Like A Huge And Invisible Protective Shield, P</div><div class="t" style="left:872.6px;top:476.1px;font-size:14px;color:#5a58d8;width:301px;overflow:hidden">laying A Vital Role In The Cosmic Environment. It Effec</div><div class="t" style="left:872.6px;top:506.1px;font-size:14px;color:#5a58d8;width:301px;overflow:hidden">tively Resists Most Of The Various Types Of Rays In The</div><div class="t" style="left:872.6px;top:536.1px;font-size:14px;color:#5a58d8;width:150px;overflow:hidden"> Universe, Such As High-Energy C</div></div></div>
<div class="a" style="left:117.7px;top:905.6px;width:244.4px;height:172.1px;border-radius:6px;overflow:hidden;background:#fff"><div class="a th" style="left:0;top:0;width:1239px;height:876px;transform:scale(0.19725);transform-origin:0 0"><div class="lbl" style="left:49.7px;top:50.8px;width:307px"></div><div class="t" style="left:59.7px;top:60.1px;font-size:15px;color:#fff;font-weight:bold;font-family:'Liberation Sans';font-style:normal">Satellite Communications</div><div class="t" style="left:49.7px;top:121.2px;font-size:14px;color:#5a58d8;width:403px;overflow:hidden">harged Particle Flows. If These Rays Reach The Earth Without Obstructio</div><div class="t" style="left:49.7px;top:151.2px;font-size:14px;color:#5a58d8;width:403px;overflow:hidden">ible Protective Shield, Playing A Vital Role In The Cosmic Environment.</div><div class="t" style="left:49.7px;top:181.2px;font-size:14px;color:#5a58d8;width:403px;overflow:hidden"> It Effectively Resists Most Of The Various Types Of Rays In The Univer</div><div class="t" style="left:49.7px;top:211.2px;font-size:14px;color:#5a58d8;width:403px;overflow:hidden">se, Such As High-Energy Charged Particle Flows. If These Rays Reach The</div><div class="t" style="left:49.7px;top:241.2px;font-size:14px;color:#5a58d8;width:403px;overflow:hidden"> Is Like A Huge And Invisible Protective Shield, Playing A Vital Role I</div><div class="t" style="left:49.7px;top:271.1px;font-size:14px;color:#5a58d8;width:40px;overflow:hidden">n The Cosmic Env</div><svg width="1239" height="876" viewBox="0 0 1239 876" style="left:0;top:0"><rect x="205" y="355" width="45" height="22" fill="#b3b2f2" stroke="#6d6ce0" stroke-width="3"/><rect x="268" y="355" width="45" height="22" fill="#b3b2f2" stroke="#6d6ce0" stroke-width="3"/><circle cx="259" cy="366" r="12" fill="#9b9aee" stroke="#6d6ce0" stroke-width="3"/><path d="M245 392 L150 455 M273 392 L365 455" stroke="#5a58d8" stroke-width="3"/><path d="M100 455 Q 125 420 150 470 Q 125 520 100 455 Z M360 455 Q 385 420 410 470 Q 385 520 360 455 Z" fill="#a9a8f0" stroke="#6d6ce0" stroke-width="3"/><path d="M100 540 L125 480 L150 540 Z M360 540 L385 480 L410 540 Z" fill="#b8b7f4" stroke="#8a89e6" stroke-width="3"/><path d="M534.5 53.5 V838.7" stroke="#9897e8" stroke-width="3"/><g transform="translate(784 621) rotate(40.3)"><rect x="-172" y="-44" width="344" height="88" fill="#aaa9f6"/><path d="M-150 -44 V44 M-125 -44 V44 M-100 -44 V44 M-75 -44 V44 M75 -44 V44 M100 -44 V44 M125 -44 V44 M150 -44 V44 M-172 -15 H172 M-172 15 H172" stroke="#c6c5fa" stroke-width="3"/></g><g transform="translate(793.7 612.5) rotate(-40.3)"><rect x="-85" y="-31" width="170" height="62" rx="6" fill="#8684f6"/><path d="M85 -26 L120 -12 Q128 0 120 12 L85 26 Z" fill="#8c8af7" stroke="#6462ee" stroke-width="5"/><path d="M-85 -40 Q-118 0 -85 40 Z" fill="#5e5cf2"/><path d="M-100 -40 Q-140 0 -100 40 L-85 31 L-85 -31 Z" fill="#5e5cf2"/><rect x="-20" y="-31" width="55" height="62" fill="#5b58f0"/></g></svg><div class="t" style="left:49.7px;top:599.1px;font-size:14px;color:#5a58d8;width:403px;overflow:hidden">ironment. It Effectively Resists Most Of The Various Types Of Rays In T</div><div class="t" style="left:49.7px;top:629.1px;font-size:14px;color:#5a58d8;width:403px;overflow:hidden">he Universe, Such As High-Energy Charged Particle Flows. If These Rays </div><div class="t" style="left:49.7px;top:659.1px;font-size:14px;color:#5a58d8;width:403px;overflow:hidden">tic Field Is Like A Huge And Invisible Protective Shield, Playing A Vit</div><div class="t" style="left:49.7px;top:689.1px;font-size:14px;color:#5a58d8;width:403px;overflow:hidden">al Role In The Cosmic Environment. It Effectively Resists Most Of The V</div><div class="t" style="left:49.7px;top:719.1px;font-size:14px;color:#5a58d8;width:403px;overflow:hidden">arious Types Of Rays In The Universe, Such As High-Energy Charged Parti</div><div class="t" style="left:49.7px;top:749.1px;font-size:14px;color:#5a58d8;width:403px;overflow:hidden">cle Flows. If These Rays Reach The Earth Without Obstruction, They Will</div><div class="t" style="left:49.7px;top:779.1px;font-size:14px;color:#5a58d8;width:181px;overflow:hidden">ive Shield, Playing A Vital Role In T</div><div class="lbl" style="left:572.7px;top:50.8px;width:109px"></div><div class="t" style="left:582.7px;top:60.1px;font-size:15px;color:#fff;font-weight:bold;font-family:'Liberation Sans';font-style:normal">Conclusion</div><div class="t" style="left:572.7px;top:114.2px;font-size:14px;color:#5a58d8;width:358px;overflow:hidden">he Cosmic Environment. It Effectively Resists Most Of The Variou</div><div class="t" style="left:572.7px;top:144.2px;font-size:14px;color:#5a58d8;width:358px;overflow:hidden">s Types Of Rays In The Universe, Such As High-Energy Charged Par</div><div class="t" style="left:572.7px;top:174.2px;font-size:14px;color:#5a58d8;width:358px;overflow:hidden">ticle Flows. If These Rays Reach The Earth Without Obstruction, </div><div class="t" style="left:572.7px;top:204.2px;font-size:14px;color:#5a58d8;width:358px;overflow:hidden">e Protective Shield, Playing A Vital Role In The Cosmic Environm</div><div class="t" style="left:572.7px;top:234.2px;font-size:14px;color:#5a58d8;width:358px;overflow:hidden">ent. It Effectively Resists Most Of The Various Types Of Rays In</div><div class="t" style="left:572.7px;top:264.1px;font-size:14px;color:#5a58d8;width:358px;overflow:hidden"> The Universe, Such As High-Energy Charged Particle Flows. If Th</div><div class="t" style="left:572.7px;top:294.1px;font-size:14px;color:#5a58d8;width:358px;overflow:hidden">h's Magnetic Field Is Like A Huge And Invisible Protective Shiel</div><div class="t" style="left:572.7px;top:324.1px;font-size:14px;color:#5a58d8;width:358px;overflow:hidden">d, Playing A Vital Role In The Cosmic Environment. It Effectivel</div><div class="t" style="left:572.7px;top:354.1px;font-size:14px;color:#5a58d8;width:215px;overflow:hidden">y Resists Most Of The Various Types Of Ray</div></div></div>
<div class="a" style="left:117.7px;top:1156px;width:244.4px;height:172.1px;border-radius:6px;overflow:hidden;background:#fff"><div class="a th" style="left:0;top:0;width:1239px;height:876px;transform:scale(0.19725);transform-origin:0 0"><div class="t" style="left:49.7px;top:54.1px;font-size:45.6px;color:#5457ee;font-weight:bold;font-family:'Liberation Serif';font-style:normal">Satellite Communications And <i style="font-weight:normal">Power Grids</i></div><div class="a" style="left:49.7px;top:143.6px;width:307.3px;height:82px;background:linear-gradient(90deg,#8584f4,#a4a3f7 55%,#cfcefb)"></div><div class="a" style="left:357px;top:143.6px;width:419px;height:82px;background:linear-gradient(90deg,#8584f4,#a4a3f7 55%,#cfcefb)"></div><div class="a" style="left:776px;top:143.6px;width:420.70000000000005px;height:82px;background:linear-gradient(90deg,#8584f4,#a4a3f7 55%,#cfcefb)"></div><svg width="1239" height="876" viewBox="0 0 1239 876" style="left:0;top:0"><path d="M357 143.6 V400 M776 143.6 V400" stroke="#e4e3f7" stroke-width="3"/><path d="M49.7 362 H1196.7" stroke="#e4e3f7" stroke-width="2"/></svg><div class="t" style="left:0px;width:400px;text-align:center;top:175px;font-size:15px;color:#fff">Comparison Dimension</div><div class="t" style="left:366px;width:400px;text-align:center;top:175px;font-size:15px;color:#fff">Satellite Communications</div><div class="t" style="left:786px;width:400px;text-align:center;top:175px;font-size:15px;color:#fff">Power Grids</div><div class="t" style="left:0px;width:400px;text-align:center;top:282px;font-size:15px;font-weight:bold;color:#4f4dc8">Global Coverage(As Of 2024)</div><div class="t" style="left:376px;width:380px;text-align:center;top:265px;font-size:13px;color:#6462d8;overflow:hidden">s In The Universe, Such As High-Energy Charged Particle</div><div class="t" style="left:796px;width:380px;text-align:center;top:265px;font-size:13px;color:#6462d8;overflow:hidden"> Flows. If These Rays Reach The Earth Without Obstructi</div><div class="t" style="left:376px;width:380px;text-align:center;top:292px;font-size:13px;color:#6462d8;overflow:hidden">sible Protective Shield, Playing A Vital Role In The Co</div><div class="t" style="left:796px;width:380px;text-align:center;top:292px;font-size:13px;color:#6462d8;overflow:hidden">smic Environment. It Effectively Resists Most Of The Va</div><div class="t" style="left:376px;width:380px;text-align:center;top:319px;font-size:13px;color:#6462d8;overflow:hidden">rious Types Of Rays In The Universe, Such As High-Energ</div><div class="t" style="left:796px;width:380px;text-align:center;top:319px;font-size:13px;color:#6462d8;overflow:hidden">y Charged Particle Flows. If These Rays Reach The Earth</div></div></div>
<div class="a" style="left:267.3px;top:292.6px;width:7.5px;height:7.5px;border-radius:1.5px;background:#59683a;border:1px solid #2f3a22"></div>
<div class="a" style="left:117.7px;top:153.2px;width:244.4px;height:172.1px;border-radius:6px;border:3px solid #7275f2"></div>
<div class="a" style="left:117.7px;top:403.2px;width:244.4px;height:43px;border-radius:6px 6px 0 0;border:3px solid #7275f2"></div>
<div class="a" style="left:605px;top:113px;width:1239px;height:875.5px;overflow:hidden"><div class="t" style="left:77.5px;top:80.94px;font-size:45.8px;color:#5457ee;font-weight:bold;font-family:'Liberation Serif';font-style:normal;">Formation Of The</div><div class="t" style="left:76px;top:147.11px;font-size:45px;color:#5457ee;font-weight:normal;font-family:'Liberation Serif';font-style:italic;">Earth’s Magnetic Field</div><div class="lbl" style="left:630.2px;top:74.1px;width:171.3px"></div><div class="t" style="left:642px;top:81.66px;font-size:18px;color:#fff;font-weight:bold;font-family:'Liberation Sans';font-style:normal;">Earth's Magnetic</div><div class="t" style="left:631px;top:122.55px;font-size:14px;color:#5a58d8;font-weight:normal;font-family:'Liberation Sans';font-style:normal;">The Earth's Magnetic Field Is Like A Huge And Invisible Protective Shield,</div><div class="t" style="left:631px;top:152.62px;font-size:14px;color:#5a58d8;font-weight:normal;font-family:'Liberation Sans';font-style:normal;">Playing A Vital Role In The Cosmic Environment. It Effectively Resists Most</div><div class="t" style="left:631px;top:182.69px;font-size:14px;color:#5a58d8;font-weight:normal;font-family:'Liberation Sans';font-style:normal;">Of The Various Types Of Rays in The Universe, Such As High-Energy</div><div class="t" style="left:631px;top:212.76px;font-size:14px;color:#5a58d8;font-weight:normal;font-family:'Liberation Sans';font-style:normal;">Charged Particle Flows.</div><svg width="1239" height="877" style="left:0;top:0" viewBox="0 0 1239 877"><path d="M327.6 358.5 A141.9 141.9 0 1 0 305.0 470.6" fill="none" stroke="#dcdcf7" stroke-width="1.0"/><path d="M335.5 361.3 A143.2 143.2 0 1 1 308.8 472.0" fill="none" stroke="#dcdcf7" stroke-width="1.0"/><path d="M327.6 358.5 A118.1 118.1 0 1 0 305.0 470.6" fill="none" stroke="#bdbcf1" stroke-width="1.1"/><path d="M335.5 361.3 A118.2 118.2 0 1 1 308.8 472.0" fill="none" stroke="#bdbcf1" stroke-width="1.1"/><path d="M327.6 358.5 A98.1 98.1 0 1 0 305.0 470.6" fill="none" stroke="#a2a1eb" stroke-width="1.15"/><path d="M335.5 361.3 A97.2 97.2 0 1 1 308.8 472.0" fill="none" stroke="#a2a1eb" stroke-width="1.15"/><path d="M327.6 358.5 A81.0 81.0 0 1 0 305.0 470.6" fill="none" stroke="#8988e5" stroke-width="1.2"/><path d="M335.5 361.3 A80.5 80.5 0 1 1 308.8 472.0" fill="none" stroke="#8988e5" stroke-width="1.2"/><path d="M327.6 358.5 A67.7 67.7 0 1 0 305.0 470.6" fill="none" stroke="#7978e1" stroke-width="1.25"/><path d="M335.5 361.3 A67.2 67.2 0 1 1 308.8 472.0" fill="none" stroke="#7978e1" stroke-width="1.25"/><path d="M327.6 358.5 A59.0 59.0 0 1 0 305.0 470.6" fill="none" stroke="#6f6ede" stroke-width="1.3"/><path d="M335.5 361.3 A58.7 58.7 0 1 1 308.8 472.0" fill="none" stroke="#6f6ede" stroke-width="1.3"/><path d="M49.2 353.5 L52.0 359.5 L46.4 359.5 Z" fill="#dcdcf7" transform="rotate(14 49.2 357.0)"/><path d="M588.0 470.5 L590.8 476.5 L585.2 476.5 Z" fill="#dcdcf7" transform="rotate(-20 588.0 474.0)"/><path d="M99.8 366.4 L102.6 372.4 L97.0 372.4 Z" fill="#bdbcf1" transform="rotate(14 99.8 369.9)"/><path d="M537.5 461.5 L540.3 467.5 L534.7 467.5 Z" fill="#bdbcf1" transform="rotate(-20 537.5 465.0)"/><path d="M142.4 375.8 L145.2 381.8 L139.6 381.8 Z" fill="#a2a1eb" transform="rotate(14 142.4 379.3)"/><path d="M494.0 452.1 L496.8 458.1 L491.2 458.1 Z" fill="#a2a1eb" transform="rotate(-20 494.0 455.6)"/><path d="M180.7 384.3 L183.5 390.3 L177.9 390.3 Z" fill="#8988e5" transform="rotate(14 180.7 387.8)"/><path d="M456.0 444.5 L458.8 450.5 L453.2 450.5 Z" fill="#8988e5" transform="rotate(-20 456.0 448.0)"/><path d="M214.5 392.0 L217.3 398.0 L211.7 398.0 Z" fill="#7978e1" transform="rotate(14 214.5 395.5)"/><path d="M422.0 437.5 L424.8 443.5 L419.2 443.5 Z" fill="#7978e1" transform="rotate(-20 422.0 441.0)"/><path d="M244.4 397.5 L247.2 403.5 L241.6 403.5 Z" fill="#6f6ede" transform="rotate(14 244.4 401.0)"/><path d="M392.9 429.5 L395.7 435.5 L390.1 435.5 Z" fill="#6f6ede" transform="rotate(-20 392.9 433.0)"/><path d="M380.4 270.6 L253.60000000000002 561.6" stroke="#6a69dd" stroke-width="1.4"/><path d="M351.79999999999995 270.6 L285.70000000000005 563.4" stroke="#6a69dd" stroke-width="1.2" stroke-dasharray="4 3"/><circle cx="318.6" cy="415.9" r="55.3" fill="#f4f4fe" stroke="#6f6edd" stroke-width="1.25"/><path d="M326.1 382.2 L324.4 417.5 L313.1 415.20000000000005 Z" fill="#b9b8f4"/><path d="M312 418 L323.29999999999995 420.29999999999995 L310.20000000000005 453.79999999999995 Z" fill="#6b69f0"/><path d="M344 311 Q352 314 358 318" fill="none" stroke="#6a69dd" stroke-width="1.6"/><ellipse cx="371" cy="290" rx="10.5" ry="6.5" transform="rotate(15 371 290)" fill="none" stroke="#6a69dd" stroke-width="1.3"/><path d="M379 285 l4 3 l-5 2 z" fill="#6a69dd"/><ellipse cx="261" cy="544.5" rx="10.5" ry="6.5" transform="rotate(15 261 544.5)" fill="none" stroke="#6a69dd" stroke-width="1.3"/><path d="M269 539 l4 3 l-5 2 z" fill="#6a69dd"/></svg><svg width="1239" height="877" style="left:0;top:0" viewBox="0 0 1239 877"><circle cx="642.4" cy="306.4" r="12.3" fill="#f1f0fd" stroke="#c9c8f3" stroke-width="1.5"/><path d="M642.4 352.2 V375.4" stroke="#c2c1f1" stroke-width="1.6"/><circle cx="701.5" cy="306.4" r="17.9" fill="#e4e3fb" stroke="#a8a7ec" stroke-width="1.5"/><path d="M701.5 352.2 V375.4" stroke="#a4a3ea" stroke-width="1.6"/><circle cx="771.8" cy="306.4" r="22.7" fill="#cbcaf9" stroke="#7675e2" stroke-width="1.5"/><path d="M771.8 352.2 V375.4" stroke="#7675dc" stroke-width="1.6"/><circle cx="856.1" cy="306.4" r="28.6" fill="#b5b4f6" stroke="#5958d6" stroke-width="1.5"/><path d="M856.1 352.2 V375.4" stroke="#5351cd" stroke-width="1.6"/><circle cx="940.6" cy="306.4" r="22.7" fill="#cbcaf9" stroke="#7675e2" stroke-width="1.5"/><path d="M940.6 352.2 V375.4" stroke="#7675dc" stroke-width="1.6"/><circle cx="1013.8" cy="306.4" r="17.9" fill="#e4e3fb" stroke="#a8a7ec" stroke-width="1.5"/><path d="M1013.8 352.2 V375.4" stroke="#a4a3ea" stroke-width="1.6"/><circle cx="1091.5" cy="306.4" r="12.3" fill="#f1f0fd" stroke="#c9c8f3" stroke-width="1.5"/><path d="M1091.5 352.2 V375.4" stroke="#c2c1f1" stroke-width="1.6"/><ellipse cx="856.1" cy="306.4" rx="43" ry="10.5" transform="rotate(32 856.1 306.4)" fill="none" stroke="#5958d6" stroke-width="1.6"/><circle cx="856.1" cy="306.4" r="28.6" fill="#b5b4f6" stroke="#5958d6" stroke-width="1.5"/><path d="M819.6 283.6 A43 10.5 32 0 0 892.6 329.2" fill="none" stroke="#5958d6" stroke-width="1.6"/></svg><div class="t" style="left:602.4px;width:80px;text-align:center;top:383.3px;font-size:10.7px;font-weight:bold;color:#c2c1f1">Venus</div><div class="t" style="left:661.5px;width:80px;text-align:center;top:383.3px;font-size:10.7px;font-weight:bold;color:#a4a3ea">Mars</div><div class="t" style="left:731.8px;width:80px;text-align:center;top:383.3px;font-size:10.7px;font-weight:bold;color:#7675dc">Jupiter</div><div class="t" style="left:816.1px;width:80px;text-align:center;top:383.3px;font-size:10.7px;font-weight:bold;color:#5351cd">Saturn</div><div class="t" style="left:900.6px;width:80px;text-align:center;top:383.3px;font-size:10.7px;font-weight:bold;color:#7675dc">Uranus</div><div class="t" style="left:973.8px;width:80px;text-align:center;top:383.3px;font-size:10.7px;font-weight:bold;color:#a4a3ea">Neptune</div><div class="t" style="left:1051.5px;width:80px;text-align:center;top:383.3px;font-size:10.7px;font-weight:bold;color:#c2c1f1">Mercury</div><div class="lbl" style="left:630.2px;top:452.2px;width:207.7px"></div><div class="t" style="left:642.9px;top:460.26px;font-size:16px;color:#fff;font-weight:bold;font-family:'Liberation Sans';font-style:normal;">Loses Its Magnetic Field</div><div class="t" style="left:631.5px;top:502.75px;font-size:14px;color:#5a58d8;font-weight:normal;font-family:'Liberation Sans';font-style:normal;">If These Rays Reach The Earth Without Obstruction, They Will Cause A</div><div class="t" style="left:631.5px;top:532.85px;font-size:14px;color:#5a58d8;font-weight:normal;font-family:'Liberation Sans';font-style:normal;">Devastating Blow To Life On Earth. Once The Earth Loses Its Magnetic</div><div class="t" style="left:631.5px;top:562.95px;font-size:14px;color:#5a58d8;font-weight:normal;font-family:'Liberation Sans';font-style:normal;">Field, The Creatures On The Earth's Surface, Whether Complex Plants And</div><div class="t" style="left:631.5px;top:593.05px;font-size:14px;color:#5a58d8;font-weight:normal;font-family:'Liberation Sans';font-style:normal;">Animals Or Tiny Microorganisms, Will Find It Difficult To Survive Under The</div><div class="t" style="left:631.5px;top:623.15px;font-size:14px;color:#5a58d8;font-weight:normal;font-family:'Liberation Sans';font-style:normal;">Radiation Of Strong Rays And Will Quickly Go To Extinction.</div><div class="lbl" style="left:82.0px;top:659.8px;width:110.2px"></div><div class="t" style="left:94px;top:667.70px;font-size:16.3px;color:#fff;font-weight:bold;font-family:'Liberation Sans';font-style:normal;">Solar Wind</div><div class="t" style="left:82.5px;top:717.45px;font-size:14px;color:#5a58d8;font-weight:normal;font-family:'Liberation Sans';font-style:normal;">At The Same Time, The Atmosphere Will Also Lose The Protection Of The Magnetic Field And Be Gradually</div><div class="t" style="left:82.5px;top:747.50px;font-size:14px;color:#5a58d8;font-weight:normal;font-family:'Liberation Sans';font-style:normal;">Stripped Away By Forces Such As The Solar Wind, And Eventually Disappear. It Can Be Said That The</div><div class="t" style="left:82.5px;top:777.55px;font-size:14px;color:#5a58d8;font-weight:normal;font-family:'Liberation Sans';font-style:normal;">Earth's Magnetic Field Provides An Indispensable Guarantee For The Reproduction Of Life On Earth And</div><div class="t" style="left:82.5px;top:807.60px;font-size:14px;color:#5a58d8;font-weight:normal;font-family:'Liberation Sans';font-style:normal;">The Stable Existence Of The Atmosphere By Shielding Dangerous Substances Such As Solar Particles.</div><div class="t" style="left:404px;top:268.92px;font-size:11.2px;color:#7877e0;font-weight:bold;font-family:'Liberation Sans';font-style:normal;">Geographic</div><div class="t" style="left:404px;top:282.82px;font-size:11.2px;color:#7877e0;font-weight:bold;font-family:'Liberation Sans';font-style:normal;">North Pole</div><div class="t" style="left:179px;top:541.52px;font-size:11.2px;color:#7877e0;font-weight:bold;font-family:'Liberation Sans';font-style:normal;">Geographic</div><div class="t" style="left:179px;top:555.52px;font-size:11.2px;color:#7877e0;font-weight:bold;font-family:'Liberation Sans';font-style:normal;">South Pole</div><div class="t" style="left:300px;top:549.32px;font-size:11.2px;color:#7877e0;font-weight:bold;font-family:'Liberation Sans';font-style:normal;">South</div><div class="t" style="left:300px;top:563.32px;font-size:11.2px;color:#7877e0;font-weight:bold;font-family:'Liberation Sans';font-style:normal;">Magnetic</div><div class="t" style="left:300px;top:577.32px;font-size:11.2px;color:#7877e0;font-weight:bold;font-family:'Liberation Sans';font-style:normal;">Pole</div><div class="t" style="left:347px;top:296.69px;font-size:11px;color:#7877e0;font-weight:bold;font-family:'Liberation Sans';font-style:normal;">1.5</div><div class="t" style="left:274px;top:255.29px;font-size:11px;color:#8a89e4;font-weight:bold;font-family:'Liberation Serif';font-style:normal;">Magnetic Pole</div><div class="t" style="left:274px;top:241.79px;font-size:11px;color:#8a89e4;font-weight:bold;font-family:'Liberation Serif';font-style:normal;">North</div></div>
<div class="a" style="left:605px;top:1019.5px;width:1239px;height:212.5px;overflow:hidden"><div class="lbl" style="left:50px;top:48.7px;width:121.9px"></div><div class="t" style="left:56.8px;top:57.4px;font-size:17.9px;color:#fff;font-weight:bold;font-family:'Liberation Sans';font-style:normal">Introduction</div><div class="t" style="left:50.8px;top:109.9px;font-size:14px;color:#5a58d8;font-weight:normal;font-family:'Liberation Sans';font-style:normal">The Earth's Magnetic Field, A Crucial Feature Of Our Planet, Has Long</div><div class="t" style="left:50.8px;top:139.9px;font-size:14px;color:#5a58d8;font-weight:normal;font-family:'Liberation Sans';font-style:normal">Intrigued Scientists. It Acts As A Shield Against Harmful Cosmic Radiation</div><div class="t" style="left:50.8px;top:169.9px;font-size:14px;color:#5a58d8;font-weight:normal;font-family:'Liberation Sans';font-style:normal">And Solar Particles, Playing A Vital Role In Protecting Life On Earth And</div><div class="t" style="left:50.8px;top:199.9px;font-size:14px;color:#5a58d8;font-weight:normal;font-family:'Liberation Sans';font-style:normal">Maintaining The Stability Of The Atmosphere. Understanding Its Formation</div><div class="t" style="left:50.8px;top:230.0px;font-size:14px;color:#5a58d8;width:470px;overflow:hidden">ke A Huge And Invisible Protective Shield, Playing A Vital Role In The Cosmic Env</div><div class="t" style="left:50.8px;top:259.9px;font-size:14px;color:#5a58d8;width:118px;overflow:hidden">ironment. It Effectively Re</div><svg width="1239" height="876" viewBox="0 0 1239 876" style="left:0;top:0"><path d="M175 335 A 130 118 0 0 0 175 568 Z" fill="#b3b2f2" stroke="#8a89e6" stroke-width="3"/><path d="M175 335 Q 210 450 175 568" fill="#d5d4f8" stroke="#8a89e6" stroke-width="3"/><path d="M195 360 Q 225 450 195 545 Q 230 450 195 360" fill="#c4c3f5" stroke="#8a89e6" stroke-width="3"/><path d="M215 380 Q 240 450 215 525" fill="none" stroke="#8a89e6" stroke-width="3"/><circle cx="240" cy="452" r="30" fill="#7d7cea"/><path d="M150 365 l20 -20 l8 28 z M150 540 l20 20 l8 -28 z" fill="#5a58d8"/><path d="M200 370 L250 310 M235 395 L290 338 M250 420 L320 372 M262 440 L350 407 M270 460 L320 462 M255 490 L320 500 M240 510 L320 540 M215 545 L320 580" stroke="#9c9bd8" stroke-width="2" fill="none"/></svg><div class="t" style="left:260px;top:289.8px;font-size:12px;color:#7776d6;font-weight:bold;font-family:'Liberation Sans';font-style:normal">Crust</div><div class="t" style="left:300px;top:317.8px;font-size:12px;color:#7776d6;font-weight:bold;font-family:'Liberation Sans';font-style:normal">Mantle</div><div class="t" style="left:330px;top:351.8px;font-size:12px;color:#7776d6;font-weight:bold;font-family:'Liberation Sans';font-style:normal">Outer Core</div><div class="t" style="left:360px;top:386.8px;font-size:12px;color:#7776d6;font-weight:bold;font-family:'Liberation Sans';font-style:normal">Inner Core</div><div class="t" style="left:332px;top:452.3px;font-size:11.5px;color:#8a89d8;font-weight:normal;font-family:'Liberation Sans';font-style:normal">sists Most Of The Various Ty</div><div class="t" style="left:332px;top:491.3px;font-size:11.5px;color:#8a89d8;font-weight:normal;font-family:'Liberation Sans';font-style:normal">pes Of Rays In The Universe,</div><div class="t" style="left:332px;top:531.3px;font-size:11.5px;color:#8a89d8;font-weight:normal;font-family:'Liberation Sans';font-style:normal"> Such As High-Energy Charged</div><div class="t" style="left:332px;top:570.3px;font-size:11.5px;color:#8a89d8;font-weight:normal;font-family:'Liberation Sans';font-style:normal"> Particle Flows. If These Ra</div><div class="a" style="left:562.2px;top:48.5px;width:1.6px;height:555px;background:#7b7ae0"></div><div class="lbl" style="left:596px;top:45.1px;width:153.8px"></div><div class="t" style="left:604.4px;top:52.8px;font-size:17.9px;color:#fff;font-weight:bold;font-family:'Liberation Sans';font-style:normal">Dynamo Theory</div><div class="t" style="left:597px;top:105.6px;font-size:14px;color:#5a58d8;font-weight:normal;font-family:'Liberation Sans';font-style:normal">The Most Widely - Accepted Theory For The Formation Of The Earth's Magnetic Field Is</div><div class="t" style="left:597px;top:135.6px;font-size:14px;color:#5a58d8;font-weight:normal;font-family:'Liberation Sans';font-style:normal">The Dynamo Theory. At The Core Of This Theory Is The Motion Of Molten Iron And Nickel</div><div class="t" style="left:597px;top:165.6px;font-size:14px;color:#5a58d8;font-weight:normal;font-family:'Liberation Sans';font-style:normal">In The Earth's Outer Core. As This Conductive Fluid Moves, It Generates Electric Currents.</div><div class="t" style="left:597px;top:195.6px;font-size:14px;color:#5a58d8;font-weight:normal;font-family:'Liberation Sans';font-style:normal">Radioactive Decay And The Residual Heat From The Planet's Formation Drive Convection</div><div class="t" style="left:597px;top:225.7px;font-size:14px;color:#5a58d8;width:560px;overflow:hidden">gnetic Field Is Like A Huge And Invisible Protective Shield, Playing A Vital Role In The Cosmi</div><div class="t" style="left:597px;top:255.7px;font-size:14px;color:#5a58d8;width:560px;overflow:hidden">c Environment. It Effectively Resists Most Of The Various Types Of Rays In The Universe, Such </div><div class="t" style="left:597px;top:285.6px;font-size:14px;color:#5a58d8;width:560px;overflow:hidden">As High-Energy Charged Particle Flows. If These Rays Reach The Earth Without Obstruction, They</div><div class="t" style="left:597px;top:315.6px;font-size:14px;color:#5a58d8;width:560px;overflow:hidden">otective Shield, Playing A Vital Role In The Cosmic Environment. It Effectively Resists Most O</div><div class="t" style="left:597px;top:345.6px;font-size:14px;color:#5a58d8;width:560px;overflow:hidden">f The Various Types Of Rays In The Universe, Such As High-Energy Charged Particle Flows. If Th</div><div class="t" style="left:597px;top:375.6px;font-size:14px;color:#5a58d8;width:101px;overflow:hidden">h's Magnetic Field Is Lik</div><div class="lbl" style="left:597.8px;top:449.5px;width:209px"></div><div class="t" style="left:607.8px;top:458.8px;font-size:15px;color:#fff;font-weight:bold;font-family:'Liberation Sans';font-style:normal">Role Of The Inner Core</div><div class="t" style="left:597.8px;top:509.1px;font-size:14px;color:#5a58d8;width:545px;overflow:hidden">e A Huge And Invisible Protective Shield, Playing A Vital Role In The Cosmic Environment. It</div><div class="t" style="left:597.8px;top:539.1px;font-size:14px;color:#5a58d8;width:545px;overflow:hidden"> Effectively Resists Most Of The Various Types Of Rays In The Universe, Such As High-Energy </div><div class="t" style="left:597.8px;top:569.1px;font-size:14px;color:#5a58d8;width:545px;overflow:hidden">Charged Particle Flows. If These Rays Reach The Earth Without Obstruction, They Will Cause A</div><div class="t" style="left:597.8px;top:599.1px;font-size:14px;color:#5a58d8;width:490px;overflow:hidden">ld, Playing A Vital Role In The Cosmic Environment. It Effectively Resists Most Of T</div><div class="lbl" style="left:48.2px;top:640.9px;width:218px"></div><div class="t" style="left:58.2px;top:650.2px;font-size:15px;color:#fff;font-weight:bold;font-family:'Liberation Sans';font-style:normal">Geomagnetic Reversal</div><div class="t" style="left:50px;top:698.1px;font-size:14px;color:#5a58d8;width:1040px;overflow:hidden">he Various Types Of Rays In The Universe, Such As High-Energy Charged Particle Flows. If These Rays Reach The Earth Without Obstruction, They Will Cause A Devastating </div><div class="t" style="left:50px;top:728.1px;font-size:14px;color:#5a58d8;width:1040px;overflow:hidden"> Vital Role In The Cosmic Environment. It Effectively Resists Most Of The Various Types Of Rays In The Universe, Such As High-Energy Charged Particle Flows. If These R</div><div class="t" style="left:50px;top:758.1px;font-size:14px;color:#5a58d8;width:1040px;overflow:hidden">agnetic Field Is Like A Huge And Invisible Protective Shield, Playing A Vital Role In The Cosmic Environment. It Effectively Resists Most Of The Various Types Of Rays </div><div class="t" style="left:50px;top:788.1px;font-size:14px;color:#5a58d8;width:187px;overflow:hidden">In The Universe, Such As High-Energy C</div></div>
<div class="a" style="left:413px;top:63px;width:177px;height:59px;border-radius:12px;background:#333235;border:1.5px solid #403f42"></div>
<svg width="40" height="40" style="left:425px;top:72px" viewBox="425 72 40 40" ><path d="M432.8 88.3 H459.4 V102.5 Q459.4 106.6 455.3 106.6 H436.9 Q432.8 106.6 432.8 102.5 Z" class="ic" style="stroke-width:1.7"/><rect x="440.5" y="93.6" width="11" height="4" rx="2" class="ic" style="stroke-width:1.6"/><path d="M438.6 79.3 L440.0 82.4 L443.4 82.8 L440.8 85.0 L441.5 88.3 L438.6 86.6 L435.7 88.3 L436.4 85.0 L433.8 82.8 L437.2 82.4 Z" class="ic" style="stroke-width:1.4"/><circle cx="448.2" cy="80.3" r="2.3" class="ic" style="stroke-width:1.5"/><path d="M450 88.2 L453.4 83 L456.8 88.2" class="ic" style="stroke-width:1.5"/></svg>
<div class="t" style="left:470.5px;top:86.57px;font-size:17.4px;color:#fff;font-weight:bold;font-family:'Liberation Sans';font-style:normal;">Ferramentas</div>
<div class="a" style="left:940px;top:62.5px;width:436px;height:60.5px;border-radius:12px;background:#2e2d30;border:1.5px solid #3c3b3e"></div>
<svg width="320" height="50" style="left:945px;top:70px" viewBox="945 70 320 50" ><path d="M960.8 82 L981.3 94.6 L970.5 97.5 L963 106 Z" class="ic" style="stroke-width:1.7"/><path d="M999.6 90.6 L1004.7 95.6 L1009.7 90.6" class="ic" style="stroke-width:1.7"/><path d="M1027.4 84.5 V101" stroke="#4a494c" stroke-width="1.2"/><path d="M1049.5 89.8 V82 H1077.5 V89.8 M1063.5 82 V105 M1056.5 105 H1070.5" class="ic" style="stroke-width:1.7"/></svg>
<div class="a" style="left:1100px;top:69.2px;width:48px;height:47.6px;border-radius:10px;background:#7b7bf9"></div>
<svg width="320" height="50" style="left:945px;top:70px" viewBox="945 70 320 50" ><rect x="1111" y="80" width="26.4" height="26.2" rx="4.5" class="ic" style="stroke-width:1.7"/><circle cx="1117.8" cy="86.8" r="1.5" fill="#fff"/><path d="M1115.8 105.5 Q1117.5 98.8 1124 98.3 M1123.8 105.8 Q1124.2 94.6 1137 94" class="ic" style="stroke-width:1.7"/><path d="M1177.8 106 H1175 Q1170.8 106 1170.8 101.8 V84.2 Q1170.8 80 1175 80 H1193.2 Q1197.3 80 1197.3 84.2 V92.8" class="ic" style="stroke-width:1.7"/><path d="M1171 86.5 H1197" class="ic" style="stroke-width:1.5"/><path d="M1175.3 83 H1177.8" class="ic" style="stroke-width:1.3"/><path d="M1186.5 96.6 H1185.6 Q1181.6 96.6 1181.6 101 Q1181.6 105.4 1185.6 105.4 H1186.5 M1193.8 96.6 H1194.7 Q1198.7 96.6 1198.7 101 Q1198.7 105.4 1194.7 105.4 H1193.8" class="ic" style="stroke-width:1.7"/><path d="M1186 101.2 H1194.3" class="ic" style="stroke-width:1.7"/><path d="M1244.5 106 H1236.5 Q1232.3 106 1232.3 101.8 V84.2 Q1232.3 80 1236.5 80 H1250 L1255.7 86 V89" class="ic" style="stroke-width:1.7"/><path d="M1250.8 106 Q1245.6 101.5 1245.6 98.2 Q1245.6 93 1250.8 93 Q1256 93 1256 98.2 Q1256 101.5 1250.8 106 Z" class="ic" style="stroke-width:1.7"/><circle cx="1250.8" cy="98.2" r="1.6" class="ic" style="stroke-width:1.4"/><path d="M1280.8 84.5 V101" stroke="#4a494c" stroke-width="1.2"/></svg>
<div class="a" style="left:1294px;top:69.2px;width:75.7px;height:47.6px;border-radius:10px;background:#414043"></div>
<div class="t" style="left:1305.5px;top:87.01px;font-size:17px;color:#f2f2f2;font-weight:normal;font-family:'Liberation Sans';font-style:normal;">Fechar</div>
<div class="a" style="left:1653.7px;top:63.3px;width:249.3px;height:59.4px;border-radius:12px;background:#2f2e31;border:1.5px solid #3b3a3d"></div>
<svg width="250" height="50" style="left:1660px;top:70px" viewBox="1660 70 250 50" ><path d="M1677 88.7 H1686.5 Q1692.7 88.7 1692.7 94.5 Q1692.7 100.4 1686.5 100.4 H1677" class="ic" style="stroke-width:1.7"/><path d="M1682.2 84 L1677 88.7 L1682.2 93.4" class="ic" style="stroke-width:1.7"/><path d="M1745.5 88.7 H1736 Q1729.8 88.7 1729.8 94.5 Q1729.8 100.4 1736 100.4 H1745.5" class="ic" style="stroke:#6b6a6d;stroke-width:1.7"/><path d="M1740.3 84 L1745.5 88.7 L1740.3 93.4" class="ic" style="stroke:#6b6a6d;stroke-width:1.7"/><path d="M1768.5 84 V100.5" stroke="#444346" stroke-width="1.2"/><rect x="1788" y="80.2" width="22.5" height="25.8" rx="4.5" class="ic" style="stroke-width:1.7"/><path d="M1793.6 80.5 V83.5 Q1793.6 85.5 1795.6 85.5 H1802.6 Q1804.6 85.5 1804.6 83.5 V80.5" class="ic" style="stroke-width:1.6"/><circle cx="1799.1" cy="96" r="4.3" class="ic" style="stroke-width:1.7"/><path d="M1829 90.8 L1833.4 95.4 L1837.9 90.8" class="ic" style="stroke-width:1.7"/></svg>
<div class="a" style="left:1857px;top:75.2px;width:33.6px;height:33.6px;border-radius:50%;background:linear-gradient(180deg,#6c68f6 0%,#4f86f4 45%,#3a9be6 70%,#2aa6c2 100%)"></div>
<svg width="40" height="40" style="left:1855px;top:73px" viewBox="1855 73 40 40" ><ellipse cx="1873.9" cy="92.8" rx="11.3" ry="6.6" transform="rotate(-12 1873.9 92.8)" fill="none" stroke="#eaf6ff" stroke-width="1.6" stroke-dasharray="15 3 19 2"/><ellipse cx="1873.9" cy="92.8" rx="6.6" ry="11.3" transform="rotate(-12 1873.9 92.8)" fill="none" stroke="#eaf6ff" stroke-width="1.6" stroke-dasharray="17 3 17 2"/><path d="M1873.8 89.8 Q1874.3 92.3 1876.8 92.8 Q1874.3 93.3 1873.8 95.8 Q1873.3 93.3 1870.8 92.8 Q1873.3 92.3 1873.8 89.8 Z" fill="#fff"/></svg>
<div class="a" style="left:413.5px;top:1174px;width:180px;height:70px;border-radius:12px;background:#333235;border:1.5px solid #403f42"></div>
<svg width="180" height="40" style="left:420px;top:1185px" viewBox="420 1185 180 40" ><path d="M447 1196.3 L438.5 1204 L447 1211.7" class="ic" style="stroke-width:1.8"/><circle cx="497" cy="1204" r="1.9" fill="#fff"/><circle cx="503" cy="1204" r="1.9" fill="#fff"/><circle cx="509" cy="1204" r="1.9" fill="#fff"/><path d="M559 1196.3 L567.5 1204 L559 1211.7" class="ic" style="stroke:#6d6c6f;stroke-width:1.6"/></svg>
<svg width="580" height="350" style="left:635px;top:365px" viewBox="635 365 580 350" ><path d="M643.2 372.5 H1205.2 V707.6 H643.2 Z" fill="none" stroke="#7072f3" stroke-width="1.6"/><circle cx="643.2" cy="372.5" r="5" fill="#7072f3"/><circle cx="1205.2" cy="372.5" r="5" fill="#7072f3"/><circle cx="643.2" cy="707.6" r="5" fill="#7072f3"/><circle cx="1205.2" cy="707.6" r="5" fill="#7072f3"/></svg>
<div class="a" style="left:641.4px;top:300.4px;width:569.5px;height:60.5px;border-radius:12px;background:#323034"></div>
<div class="a" style="left:1022.1px;top:308.3px;width:47.3px;height:46.8px;border-radius:10px;background:#4b4a72"></div>
<svg width="570" height="60" style="left:641px;top:300px" viewBox="641 300 570 60" ><path d="M659.6 333.6 A12.7 12.7 0 1 0 672.8 319.6" class="ic" style="stroke-width:1.7"/><path d="M666 320.5 L673.5 315.5 L673.5 325.5 Z" fill="#fff"/><path d="M747 333.6 A12.7 12.7 0 1 1 733.8 319.6" class="ic" style="stroke-width:1.7"/><path d="M740.6 320.5 L733.1 315.5 L733.1 325.5 Z" fill="#fff"/><path d="M788.5 327 L778.5 322 V341.8 L788.5 337" class="ic" style="stroke-width:1.6"/><path d="M796.2 327 L806.2 322 V341.8 L796.2 337" class="ic" style="stroke-width:1.6"/><path d="M792.2 319 V345.5" class="ic" style="stroke-width:1.6"/><path d="M849 327.3 L843.2 319.6 H862.8 L857 327.3" class="ic" style="stroke-width:1.6"/><path d="M849 335 L843.2 344.9 H862.8 L857 335" class="ic" style="stroke-width:1.6"/><path d="M839.5 331 H866.5" class="ic" style="stroke-width:1.6"/><path d="M889.6 322 V340" stroke="#4e4d50" stroke-width="1.2"/><path d="M915.8 316.8 V337 Q915.8 342 920.8 342 H940.8" class="ic" style="stroke-width:1.6"/><path d="M911 321.5 H930.8 Q935.9 321.5 935.9 326.5 V346.8" class="ic" style="stroke-width:1.6"/><path d="M922.5 334.5 V331.5 M922.5 334.5 H925.5 M929.5 328.5 H926.5 M929.5 328.5 V331.5" class="ic" style="stroke-width:1.5"/><path d="M974.2 321.5 Q974.2 319.3 976.4 319.3 H980.5 L984.3 323 V327.7 Q984.3 329.9 982.1 329.9 H976.4 Q974.2 329.9 974.2 327.7 Z" class="ic" style="stroke-width:1.5"/><path d="M987.5 337.2 Q987.5 335 989.7 335 H993.8 L997.6 338.7 V343 Q997.6 345.2 995.4 345.2 H989.7 Q987.5 345.2 987.5 343 Z" class="ic" style="stroke-width:1.5"/><path d="M999 330 Q998 323 991.5 319.5 M991.5 319.5 L991.8 324 M991.5 319.5 L995.8 319" class="ic" style="stroke-width:1.5"/><path d="M973 334 Q974 341 980.8 344.5 M980.8 344.5 L980.6 340 M980.8 344.5 L976.5 345" class="ic" style="stroke-width:1.5"/><path d="M1046 345.6 H1036.8 Q1032.3 345.6 1032.3 341 V323.5 Q1032.3 319 1036.8 319 H1055 Q1059.4 319 1059.4 323.5 V334" class="ic" style="stroke-width:1.6"/><circle cx="1039.8" cy="325.8" r="1.4" fill="#fff"/><path d="M1036.8 345.4 Q1038.5 335.5 1050.5 334" class="ic" style="stroke-width:1.6"/><path d="M1050.5 340.5 H1062 M1058 336.5 L1062 340.5 L1058 344.5" class="ic" style="stroke-width:1.6"/><path d="M1092.2 321.5 H1119.8" class="ic" style="stroke-width:1.7"/><path d="M1101 321 V319 Q1101 315.7 1104 315.7 H1108.5 Q1111.5 315.7 1111.5 319 V321" class="ic" style="stroke-width:1.6"/><path d="M1095.5 322 V341 Q1095.5 345.6 1100 345.6 H1112 Q1116.6 345.6 1116.6 341 V322" class="ic" style="stroke-width:1.7"/><path d="M1101.7 328.6 V338 M1110.3 328.6 V338" class="ic" style="stroke-width:1.7"/><path d="M1143.1 320.5 V340.5" stroke="#4e4d50" stroke-width="1.2"/><circle cx="1174" cy="331.8" r="1.9" fill="#fff"/><circle cx="1180" cy="331.8" r="1.9" fill="#fff"/><circle cx="1186" cy="331.8" r="1.9" fill="#fff"/></svg>
<div class="a" style="left:975.5px;top:246.8px;width:140px;height:47px;border-radius:10px;background:#131215"></div>
<svg width="30" height="20" style="left:1030px;top:290px" viewBox="1030 290 30 20" ><path d="M1037.5 293 L1045.7 303.5 L1054 293 Z" fill="#131215"/></svg>
<div class="t" style="left:987.5px;top:263.76px;font-size:17.3px;color:#fff;font-weight:normal;font-family:'Liberation Sans';font-style:normal;">Extrair imagem</div>
<svg width="400" height="300" style="left:1050px;top:350px" viewBox="1050 350 400 300" ><path d="M1098 390 L1428.5 620.5" stroke="#e21c24" stroke-width="9.5" stroke-linecap="butt"/><path d="M1064.6 365.1 L1107.9 373.1 L1084.8 403.6 Z" fill="#e21c24"/></svg>
<svg width="40" height="40" style="left:1362px;top:822px" viewBox="1362 822 40 40" ><path d="M1382 828.5 C1374 828.5 1369 833.5 1369 841.5 C1369 849.5 1374 854.5 1382 854.5 H1396 L1393.5 850.5 C1395 848 1395.8 845 1395.8 841.5 C1395.8 833.5 1390 828.5 1382 828.5 Z" fill="#fdf49c" stroke="#2f2f2f" stroke-width="1.8" stroke-linejoin="round"/><path d="M1376.5 838.5 H1387.5 M1376.5 844.5 H1387.5" stroke="#2f2f2f" stroke-width="1.8" stroke-linecap="round"/></svg>
<div class="a" style="left:736px;top:1228px;width:1160px;height:8px;border-radius:4px;background:#5a595c"></div>
<div class="a" style="left:1244px;top:1174px;width:680px;height:80px;border-radius:14px;background:#313034;border:1.5px solid #3e3d41"></div>
<div class="a" style="left:1255.6px;top:1191.6px;width:24px;height:24px;border-radius:50%;background:#4a494c"></div>
<svg width="660" height="60" style="left:1244px;top:1174px" viewBox="1244 1174 660 60" ><path d="M1266 1199 L1270.2 1203.6 L1266 1208.2" class="ic" style="stroke-width:1.7"/><rect x="1301.5" y="1192.8" width="27.6" height="22" rx="3.5" class="ic" style="stroke-width:1.7"/><path d="M1315.3 1193 V1214.6 M1305.5 1198.5 H1311 M1305.5 1203.8 H1311 M1305.5 1209 H1311 M1319.6 1198.5 H1325 M1319.6 1203.8 H1325 M1319.6 1209 H1325" class="ic" style="stroke-width:1.6"/><path d="M1371 1210.5 H1365.5 Q1361 1210.5 1361 1206 V1197 Q1361 1192.5 1365.5 1192.5 H1386 Q1390.6 1192.5 1390.6 1197 V1206 Q1390.6 1210.5 1386 1210.5 H1380.5" class="ic" style="stroke-width:1.7"/><path d="M1375.8 1206.5 L1380.2 1216.8 H1371.4 Z" class="ic" style="stroke-width:1.6"/><path d="M1412.6 1193 V1217" stroke="#4e4d50" stroke-width="1.3"/><path d="M1529.5 1206 L1537 1199.5 L1544.5 1206" class="ic" style="stroke:#5a595c;stroke-width:1.7"/><path d="M1589 1199.8 L1597.2 1208 L1605.4 1199.8" class="ic" style="stroke-width:1.8"/><path d="M1634 1193 V1217" stroke="#4e4d50" stroke-width="1.3"/><path d="M1745 1203.3 H1762" class="ic" style="stroke-width:1.8"/><path d="M1804.5 1203.3 H1822 M1813.2 1194.5 V1212" class="ic" style="stroke-width:1.8"/><rect x="1860.5" y="1192.8" width="26.8" height="22.4" rx="4.5" class="ic" style="stroke-width:1.7"/></svg>
<div class="a" style="left:1426px;top:1184.6px;width:37.7px;height:39.4px;border-radius:9px;background:#1e1d20"></div>
<div class="t" style="left:1439px;top:1197.19px;font-size:17.5px;color:#fff;font-weight:normal;font-family:'Liberation Sans';font-style:normal;">1</div>
<div class="t" style="left:1470.8px;top:1197.49px;font-size:17.5px;color:#6c6b6e;font-weight:normal;font-family:'Liberation Sans';font-style:normal;">/ 29</div>
<div class="a" style="left:1647px;top:1184.6px;width:70px;height:39.4px;border-radius:9px;background:#1f1e21"></div>
<div class="t" style="left:1660.5px;top:1198.40px;font-size:16.3px;color:#fff;font-weight:normal;font-family:'Liberation Sans';font-style:normal;">100%</div>
<div class="t" style="left:1866.3px;top:1199.61px;font-size:10.5px;color:#fff;font-weight:bold;font-family:'Liberation Sans';font-style:normal;">1:1</div></body></html>
